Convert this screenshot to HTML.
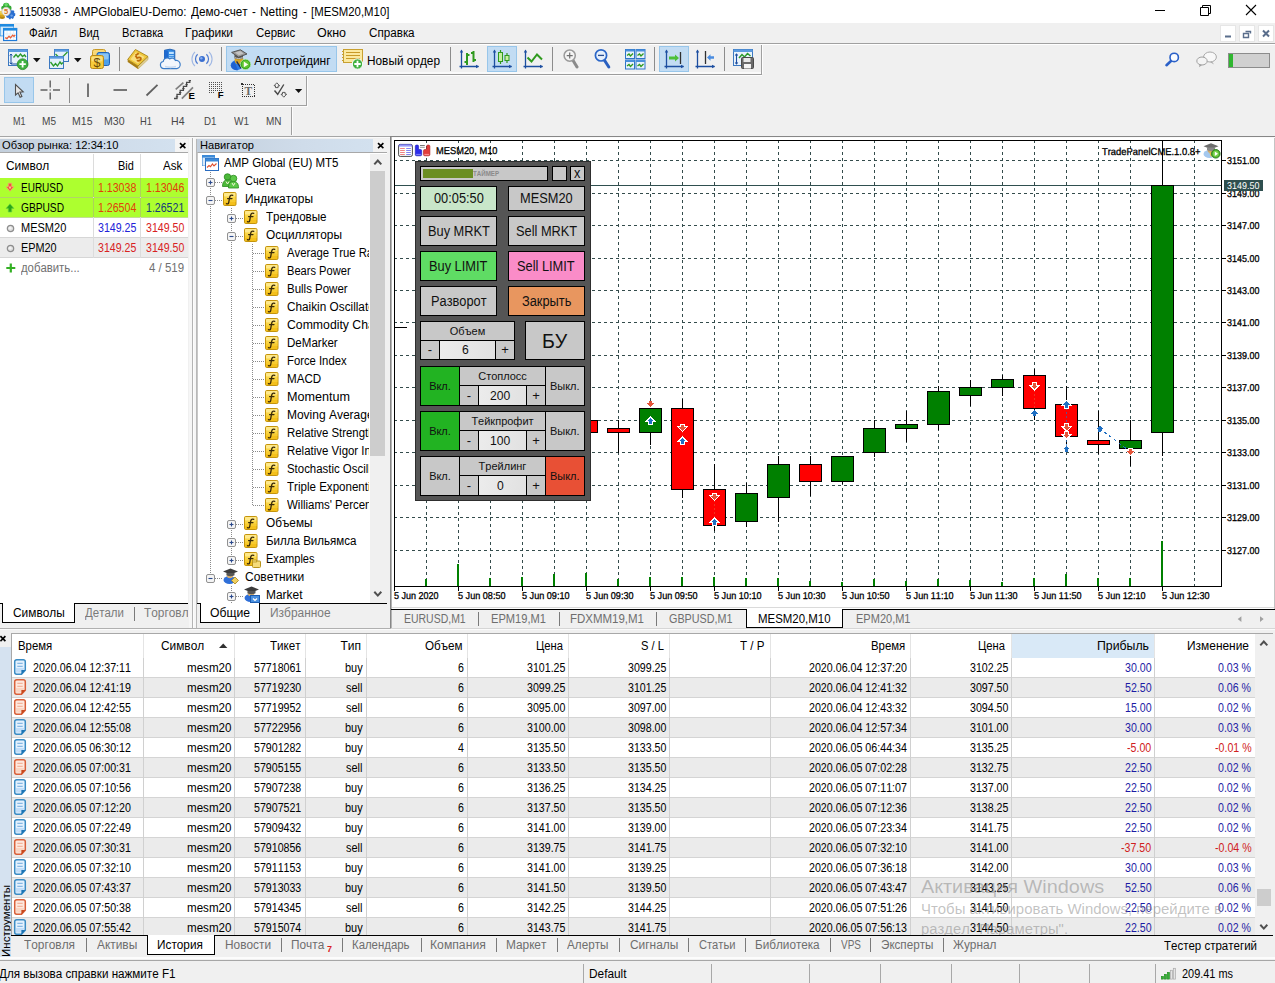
<!DOCTYPE html>
<html><head><meta charset="utf-8"><title>MT5</title>
<style>
html,body{margin:0;padding:0;}
body{font-kerning:none;width:1275px;height:983px;overflow:hidden;background:#f0f0f0;position:relative;font-family:"Liberation Sans",sans-serif;}
div,span.t,svg{position:absolute;}
span.t{white-space:pre;transform-origin:0 50%;}
svg{overflow:visible;}
.clip{overflow:hidden;}
</style></head><body>
<div style="left:0px;top:0px;width:1275px;height:23px;background:#ffffff;"></div>
<svg style="left:0px;top:2px;" width="18" height="19" viewBox="0 0 18 19">
<ellipse cx="2.2" cy="15.2" rx="2.8" ry="1.7" fill="#b8860b"/><ellipse cx="2.2" cy="13.4" rx="2.8" ry="1.7" fill="#d4a017"/><ellipse cx="2.2" cy="11.6" rx="2.8" ry="1.7" fill="#e8c030"/><ellipse cx="2.2" cy="10" rx="2.6" ry="1.5" fill="#f0d050"/>
<circle cx="10.4" cy="12.3" r="4.1" fill="#2a6fd0" stroke="#2a6fd0" stroke-width="1.6" stroke-dasharray="1.8 1.2"/><circle cx="11.6" cy="13.6" r="1.2" fill="#6aa0ea"/>
<circle cx="6.2" cy="3.9" r="3.2" fill="#3cb43c"/><circle cx="3.4" cy="6" r="2.2" fill="#34a834"/><circle cx="9.2" cy="6" r="2.4" fill="#34a834"/><circle cx="6.2" cy="2.6" r="1.6" fill="#6cd86c"/>
<circle cx="6.1" cy="9.5" r="4.2" fill="#f6f2ec" stroke="#cfc8bc" stroke-width="0.8"/>
<text x="6.1" y="12.2" font-size="7.6" font-weight="bold" text-anchor="middle" fill="#d87820" font-family="Liberation Sans">5</text></svg>
<span class="t" style="left:19.30px;top:4.25px;font-size:12px;line-height:16px;height:16px;color:#000;transform:scaleX(0.8904);">1150938</span>
<span class="t" style="left:64.40px;top:4.25px;font-size:12px;line-height:16px;height:16px;color:#000;transform:scaleX(0.9508);">-</span>
<span class="t" style="left:72.50px;top:4.25px;font-size:12px;line-height:16px;height:16px;color:#000;transform:scaleX(0.9734);">AMPGlobalEU-Demo:</span>
<span class="t" style="left:191.00px;top:4.25px;font-size:12px;line-height:16px;height:16px;color:#000;transform:scaleX(0.9752);">Демо-счет</span>
<span class="t" style="left:252.20px;top:4.25px;font-size:12px;line-height:16px;height:16px;color:#000;transform:scaleX(0.9508);">-</span>
<span class="t" style="left:260.20px;top:4.25px;font-size:12px;line-height:16px;height:16px;color:#000;transform:scaleX(0.9942);">Netting</span>
<span class="t" style="left:302.60px;top:4.25px;font-size:12px;line-height:16px;height:16px;color:#000;transform:scaleX(0.9258);">-</span>
<span class="t" style="left:311.30px;top:4.25px;font-size:12px;line-height:16px;height:16px;color:#000;transform:scaleX(0.9481);">[MESM20,M10]</span>
<svg style="left:1150px;top:0px;" width="125" height="23" viewBox="0 0 125 23">
<path d="M5 10.5H15" stroke="#000" stroke-width="1" fill="none"/>
<path d="M50.5 7.5H58.5V15.5H50.5Z M52.5 7.5V5.5H60.5V13.5H58.5" stroke="#000" stroke-width="1" fill="none"/>
<path d="M96 5L106 15M106 5L96 15" stroke="#000" stroke-width="1.1" fill="none"/></svg>
<div style="left:0px;top:23px;width:1275px;height:20px;background:#f0f0f0;"></div>
<svg style="left:0px;top:24px;" width="18" height="18" viewBox="0 0 18 18">
<rect x="0" y="0" width="14" height="12.3" fill="#1f8ae0"/><rect x="0.5" y="2.6" width="13" height="9" fill="#d6ecfc"/>
<rect x="3.6" y="4.5" width="13" height="12" fill="#ffffff" stroke="#1f7ad8" stroke-width="1.2"/><rect x="3" y="4" width="14.2" height="2.6" fill="#1f8ae0"/>
<path d="M7 7v9M10.3 7v9M13.6 7v9M4 10h12M4 13.5h12" stroke="#d8ecfa" stroke-width="0.8"/>
<path d="M5.2 13.6l1.8 1 2-2.4 1.6 1.6 2-2.6 1.4 1.2 1.2-1.6" stroke="#e8603a" stroke-width="1.3" fill="none"/></svg>
<span class="t" style="left:28.60px;top:25.25px;font-size:12px;line-height:16px;height:16px;color:#000;transform:scaleX(0.9525);">Файл</span>
<span class="t" style="left:79.30px;top:25.25px;font-size:12px;line-height:16px;height:16px;color:#000;transform:scaleX(0.9259);">Вид</span>
<span class="t" style="left:121.50px;top:25.25px;font-size:12px;line-height:16px;height:16px;color:#000;transform:scaleX(0.9264);">Вставка</span>
<span class="t" style="left:185.00px;top:25.25px;font-size:12px;line-height:16px;height:16px;color:#000;transform:scaleX(0.9922);">Графики</span>
<span class="t" style="left:255.50px;top:25.25px;font-size:12px;line-height:16px;height:16px;color:#000;transform:scaleX(0.9539);">Сервис</span>
<span class="t" style="left:317.00px;top:25.25px;font-size:12px;line-height:16px;height:16px;color:#000;transform:scaleX(1.0400);">Окно</span>
<span class="t" style="left:368.50px;top:25.25px;font-size:12px;line-height:16px;height:16px;color:#000;transform:scaleX(0.9720);">Справка</span>
<div style="left:1220px;top:25px;width:16px;height:17px;background:#ffffff;border:1px solid #e6e6e6;box-sizing:border-box;"></div>
<div style="left:1239px;top:25px;width:16px;height:17px;background:#ffffff;border:1px solid #e6e6e6;box-sizing:border-box;"></div>
<div style="left:1258px;top:25px;width:16px;height:17px;background:#ffffff;border:1px solid #e6e6e6;box-sizing:border-box;"></div>
<svg style="left:1220px;top:25px;" width="55" height="17" viewBox="0 0 55 17">
<rect x="5" y="10.5" width="6" height="2" fill="#5a6e8c"/>
<path d="M25.5 6.5H30.5V8.5M23.5 8.5H28.5V12.5H23.5Z" stroke="#5a6e8c" stroke-width="1.4" fill="none"/>
<path d="M43 5.5L49 11.5M49 5.5L43 11.5" stroke="#5a6e8c" stroke-width="2" fill="none"/></svg>
<div style="left:0px;top:43px;width:1275px;height:1px;background:#a0a0a0;"></div>
<div style="left:0px;top:44px;width:1275px;height:1px;background:#ffffff;"></div>
<div style="left:0px;top:72px;width:761px;height:2px;background:#fafafa;"></div>
<div style="left:0px;top:74px;width:762px;height:1px;background:#9c9c9c;"></div>
<div style="left:0px;top:75px;width:762px;height:1px;background:#fcfcfc;"></div>
<div style="left:761px;top:45px;width:1px;height:29px;background:#a0a0a0;"></div>
<div style="left:762px;top:45px;width:1px;height:29px;background:#fdfdfd;"></div>
<div style="left:119px;top:47px;width:1px;height:24px;background:#8c8c8c;"></div>
<div style="left:221px;top:47px;width:1px;height:24px;background:#8c8c8c;"></div>
<div style="left:450px;top:47px;width:1px;height:24px;background:#8c8c8c;"></div>
<div style="left:552px;top:47px;width:1px;height:24px;background:#8c8c8c;"></div>
<div style="left:654px;top:47px;width:1px;height:24px;background:#8c8c8c;"></div>
<div style="left:724px;top:47px;width:1px;height:24px;background:#8c8c8c;"></div>
<div style="left:226px;top:46px;width:111px;height:26px;background:#c2dcf3;border:1px solid #98c6ea;box-sizing:border-box;"></div>
<div style="left:487px;top:46px;width:30px;height:26px;background:#c2dcf3;border:1px solid #98c6ea;box-sizing:border-box;"></div>
<div style="left:659px;top:46px;width:30px;height:26px;background:#c2dcf3;border:1px solid #98c6ea;box-sizing:border-box;"></div>
<svg style="left:8px;top:49px;" width="21" height="21" viewBox="0 0 21 21">
<rect x="0.5" y="0.5" width="19" height="16" fill="#eaf3fc" stroke="#3c78c0"/><rect x="0.5" y="0.5" width="19" height="2.5" fill="#5b9be0"/>
<path d="M3 5v10M1.8 6.5L3 5l1.2 1.5M1.8 13.5L3 15l1.2-1.5M3 15h9" stroke="#1c4ea0" stroke-width="1" fill="none"/>
<path d="M5.5 8.5l2.5-3 2 2.5 2.5-3 2 2.5 2 -1.5 1.5 2" stroke="#2a9a2a" stroke-width="1.4" fill="none"/>
<circle cx="14.6" cy="15.2" r="5.4" fill="#3fb03f" stroke="#2a8a2a" stroke-width="0.8"/><path d="M14.6 12v6.4M11.4 15.2h6.4" stroke="#fff" stroke-width="1.8"/></svg>
<svg style="left:33px;top:58px;" width="8" height="5" viewBox="0 0 8 5"><path d="M0 0h7.5L3.75 4.2z" fill="#111"/></svg>
<svg style="left:49px;top:49px;" width="21" height="21" viewBox="0 0 21 21">
<rect x="5.5" y="0.5" width="14" height="12" fill="#e4f0fb" stroke="#3c78c0"/><rect x="5.5" y="0.5" width="14" height="2.2" fill="#5b9be0"/>
<path d="M6.5 5l4 4 4-2 4-4" stroke="#2a9a2a" stroke-width="1.3" fill="none"/>
<rect x="0.5" y="7.5" width="14" height="12" fill="#e4f0fb" stroke="#3c78c0"/><rect x="0.5" y="7.5" width="14" height="2.2" fill="#5b9be0"/>
<path d="M1.5 13l3 4 2-2.5 2 2.5 2.5-4 1.5 2 1.5-1.5" stroke="#2a9a2a" stroke-width="1.3" fill="none"/></svg>
<svg style="left:74px;top:58px;" width="8" height="5" viewBox="0 0 8 5"><path d="M0 0h7.5L3.75 4.2z" fill="#111"/></svg>
<svg style="left:90px;top:49px;" width="21" height="21" viewBox="0 0 21 21">
<rect x="2.5" y="0.5" width="13" height="13" rx="2" fill="#f8d878" stroke="#c89a28"/>
<rect x="7" y="3.5" width="12.5" height="13" rx="2" fill="#4fa0e8" stroke="#1f62b8"/><rect x="8" y="4.5" width="10.5" height="6" rx="1.5" fill="#8cc4f4"/>
<rect x="0.5" y="6.5" width="13" height="13" rx="2" fill="#f7cb3a" stroke="#b8881a"/><rect x="1.5" y="7.5" width="11" height="5" rx="1.5" fill="#fbe07a"/>
<text x="7" y="17.9" font-size="12.5" text-anchor="middle" fill="#6a4a08" font-family="Liberation Sans">$</text></svg>
<svg style="left:127px;top:49px;" width="22" height="21" viewBox="0 0 22 21">
<path d="M0.7 10.5l10.3 6.5v3L0.7 13z" fill="#a87c14"/>
<path d="M11 17L21 7.5v3L11 20z" fill="#efe6c0" stroke="#b89a3a" stroke-width="0.6"/><path d="M11 18l10-9.5M11 19l10-9.5" stroke="#c8b060" stroke-width="0.5"/>
<path d="M0.7 10.5L8.4 0.5 21 7.5 11 17z" fill="#f0c83c" stroke="#a88418" stroke-width="0.9"/>
<path d="M3.5 10.3L8.8 3.2 17.5 8 10.8 14.4z" fill="#f8e080"/>
<path d="M8.4 6.6l3.4-2.4M8.4 6.6l1.7 2.4c3-1.7 4.9.4 3.1 2.1-1.1 1-2.5.7-3.1 0" stroke="#c06c08" stroke-width="1.8" fill="none"/></svg>
<svg style="left:160px;top:49px;" width="21" height="21" viewBox="0 0 21 21">
<path d="M4.5 1.2l5.5-1 4.8 1.2v9.6H4.5z" fill="#2f86e0" stroke="#1c5cb0" stroke-width="0.9"/><path d="M4.5 1.2l3.5.6v9.2H4.5z" fill="#1f6ad0"/>
<rect x="9" y="2.8" width="4.8" height="2.2" fill="#bfe2ff"/><rect x="9" y="6" width="4.8" height="1.2" fill="#9fd0fb"/><rect x="9" y="8" width="4.8" height="1.2" fill="#9fd0fb"/>
<path d="M4 19.6a3.6 3.6 0 0 1-.8-7.1 4 4 0 0 1 6.6-2.6 3.6 3.6 0 0 1 5.6 1.6 4.1 4.1 0 0 1 1.4 8.1z" fill="#f2f6fc" stroke="#3a7cc8" stroke-width="1.2"/>
<path d="M5 17.6c3 .8 8 .8 11 0" stroke="#c8daf0" stroke-width="1.6" fill="none"/></svg>
<svg style="left:192px;top:49px;" width="21" height="21" viewBox="0 0 21 21">
<circle cx="10" cy="10" r="3" fill="#3a6fd0"/><circle cx="9.3" cy="9.2" r="1.2" fill="#86aef0"/>
<path d="M5.6 5.2a6.5 6.5 0 0 0 0 9.6M14.4 5.2a6.5 6.5 0 0 1 0 9.6" stroke="#4a78d0" stroke-width="1.2" fill="none"/>
<path d="M3 2.8a10 10 0 0 0 0 14.4M17 2.8a10 10 0 0 1 0 14.4" stroke="#a0b8e4" stroke-width="1.1" fill="none"/></svg>
<svg style="left:230px;top:49px;" width="22" height="22" viewBox="0 0 22 22">
<ellipse cx="6.6" cy="16.3" rx="5.9" ry="5" fill="#2a7ae8"/><path d="M1 17c1 3.4 4 4.4 7 4.2L4.4 12.6C2.4 13.4 1 15 1 17z" fill="#1f62d0"/>
<path d="M4.7 9.2h8.6v2.6c0 2.2-2 3.6-4.3 3.6s-4.3-1.4-4.3-3.6z" fill="#d8a424"/>
<path d="M6.6 12.4l4.6 7" stroke="#1c2c50" stroke-width="1.3"/>
<path d="M4.4 5.6v3.6c2.6 1.5 6 1.5 8.6 0V5.6z" fill="#5a5a5a"/><path d="M4.8 8.6c2.4 1.2 5.4 1.2 7.8 0" stroke="#c8c8c8" stroke-width="1" fill="none"/>
<path d="M1.6 3.4L10.4 0.8 17 5 8.6 8.2z" fill="#9a9a9a" stroke="#4a4a4a" stroke-width="0.9"/><path d="M5 3.6l5-1.5 3.6 2.3-4.8 1.8z" fill="#c4c4c4"/>
<circle cx="15.5" cy="15.4" r="5.2" fill="#3aa81c" stroke="#b8ecb0" stroke-width="0.7"/><circle cx="15.5" cy="15.2" r="3.8" fill="#62c634"/>
<path d="M13.8 12.6v5.6l4.4-2.8z" fill="#fbfff0"/></svg>
<span class="t" style="left:254.30px;top:53.25px;font-size:12px;line-height:16px;height:16px;color:#000;">Алготрейдинг</span>
<svg style="left:342px;top:48px;" width="22" height="22" viewBox="0 0 22 22">
<rect x="1.5" y="1.5" width="19" height="13" fill="#fbe9a0" stroke="#c8a030"/>
<path d="M4 4.5h14M4 7.5h14M4 10.5h14" stroke="#c89a28" stroke-width="1"/><path d="M1.5 3.5h-1.5M1.5 6.5h-1.5M1.5 9.5h-1.5M1.5 12.5h-1.5" stroke="#c8a030"/>
<circle cx="15.5" cy="16" r="5.2" fill="#3fb03f" stroke="#fff" stroke-width="1"/><path d="M15.5 12.8v6.4M12.3 16h6.4" stroke="#fff" stroke-width="1.8"/></svg>
<span class="t" style="left:366.50px;top:53.25px;font-size:12px;line-height:16px;height:16px;color:#000;transform:scaleX(0.9855);">Новый ордер</span>
<svg style="left:459px;top:49px;" width="21" height="21" viewBox="0 0 21 21"><path d="M2.5 1.5v18M0.5 17.5h19" stroke="#1c4ea0" stroke-width="1.3" fill="none"/><path d="M0.8 3.6L2.5 0.5l1.7 3.1z M17 15.8l3.1 1.7-3.1 1.7z" fill="#1c4ea0"/><path d="M8 4v12M5.5 13H8M8 6h2.5M14.5 2v11M12 4h2.5M14.5 11H17" stroke="#2f9a1e" stroke-width="2" fill="none"/></svg>
<svg style="left:492px;top:49px;" width="21" height="21" viewBox="0 0 21 21"><path d="M2.5 1.5v18M0.5 17.5h19" stroke="#1c4ea0" stroke-width="1.3" fill="none"/><path d="M0.8 3.6L2.5 0.5l1.7 3.1z M17 15.8l3.1 1.7-3.1 1.7z" fill="#1c4ea0"/><path d="M8.5 1v14M15 4v10" stroke="#2f9a1e" stroke-width="1.2"/><rect x="6.5" y="3.5" width="4" height="9" fill="#c8f0a0" stroke="#2f9a1e"/><rect x="13" y="6.5" width="4" height="5" fill="#c8f0a0" stroke="#2f9a1e"/></svg>
<svg style="left:523px;top:49px;" width="21" height="21" viewBox="0 0 21 21"><path d="M2.5 1.5v18M0.5 17.5h19" stroke="#1c4ea0" stroke-width="1.3" fill="none"/><path d="M0.8 3.6L2.5 0.5l1.7 3.1z M17 15.8l3.1 1.7-3.1 1.7z" fill="#1c4ea0"/><path d="M4.5 8.5l4 4 5.5-7 5 5" stroke="#2f9a1e" stroke-width="2" fill="none"/></svg>
<svg style="left:563px;top:49px;" width="16" height="21" viewBox="0 0 16 21"><path d="M9.5 10.5l4.5 7.5" stroke="#8a8a8a" stroke-width="3" stroke-linecap="round"/>
<circle cx="6.7" cy="6.6" r="5.6" fill="#f4f4f4" stroke="#9a9a9a" stroke-width="1.5"/><path d="M6.7 3.6v6M3.7 6.6h6" stroke="#707070" stroke-width="1.2"/></svg>
<svg style="left:594px;top:49px;" width="17" height="21" viewBox="0 0 17 21"><path d="M10 10.5l4.8 7.5" stroke="#2a60c0" stroke-width="3" stroke-linecap="round"/>
<circle cx="7" cy="6.4" r="5.6" fill="#e6f0fc" stroke="#2a66c8" stroke-width="1.7"/><path d="M4 6.4h6" stroke="#2a4e90" stroke-width="1.3"/></svg>
<svg style="left:625px;top:49px;" width="21" height="21" viewBox="0 0 21 21"><rect x="0.5" y="0.5" width="9" height="9" fill="#e8f2fc" stroke="#2f76c8"/><rect x="0.5" y="0.5" width="9" height="2" fill="#4a90dc"/><path d="M2 6.5l2-1.5 1.5 2 2.5-2.5" stroke="#2f9a1e" stroke-width="1.3" fill="none"/><rect x="11.0" y="0.5" width="9" height="9" fill="#e8f2fc" stroke="#2f76c8"/><rect x="11.0" y="0.5" width="9" height="2" fill="#4a90dc"/><path d="M12.5 6.5l2-1.5 1.5 2 2.5-2.5" stroke="#2f9a1e" stroke-width="1.3" fill="none"/><rect x="0.5" y="11.0" width="9" height="9" fill="#e8f2fc" stroke="#2f76c8"/><rect x="0.5" y="11.0" width="9" height="2" fill="#4a90dc"/><path d="M2 17.0l2-1.5 1.5 2 2.5-2.5" stroke="#2f9a1e" stroke-width="1.3" fill="none"/><rect x="11.0" y="11.0" width="9" height="9" fill="#e8f2fc" stroke="#2f76c8"/><rect x="11.0" y="11.0" width="9" height="2" fill="#4a90dc"/><path d="M12.5 17.0l2-1.5 1.5 2 2.5-2.5" stroke="#2f9a1e" stroke-width="1.3" fill="none"/></svg>
<svg style="left:664px;top:49px;" width="21" height="21" viewBox="0 0 21 21"><path d="M2.5 1.5v18M0.5 17.5h19" stroke="#1c4ea0" stroke-width="1.3" fill="none"/><path d="M0.8 3.6L2.5 0.5l1.7 3.1z M17 15.8l3.1 1.7-3.1 1.7z" fill="#1c4ea0"/><path d="M16.5 3v12" stroke="#303030" stroke-width="1.3"/><path d="M5 7.5h6v-2l4 3.5-4 3.5v-2H5z" fill="#4cc03a"/></svg>
<svg style="left:695px;top:49px;" width="21" height="21" viewBox="0 0 21 21"><path d="M2.5 1.5v18M0.5 17.5h19" stroke="#1c4ea0" stroke-width="1.3" fill="none"/><path d="M0.8 3.6L2.5 0.5l1.7 3.1z M17 15.8l3.1 1.7-3.1 1.7z" fill="#1c4ea0"/><path d="M10.5 2v13" stroke="#303030" stroke-width="1.3"/><path d="M19 7.2h-3.5v-2L12 8.5l3.5 3.3v-2H19z" fill="#4a8ce0"/></svg>
<svg style="left:733px;top:49px;" width="22" height="21" viewBox="0 0 22 21">
<rect x="0.5" y="0.5" width="19" height="16" fill="#eaf3fc" stroke="#3c78c0"/><rect x="0.5" y="0.5" width="19" height="2.5" fill="#5b9be0"/>
<path d="M3.5 5v10M2.2 6.5L3.5 5l1.3 1.5M2.2 13.5L3.5 15l1.3-1.5" stroke="#1c4ea0" stroke-width="1.1" fill="none"/>
<path d="M6 9l3-3.5 2.5 2.5 3-3.5 3 2.5" stroke="#2a9a2a" stroke-width="1.5" fill="none"/>
<rect x="8.5" y="8.5" width="12" height="11" rx="1" fill="#6a6a6a" stroke="#4a4a4a"/><rect x="10.5" y="9" width="7" height="4" fill="#e8e8e8"/><rect x="11" y="15" width="7" height="4.5" fill="#f4f4f4"/></svg>
<svg style="left:1165px;top:52px;" width="15" height="15" viewBox="0 0 15 15"><path d="M6.5 8.5L1.5 13.2" stroke="#2a60c8" stroke-width="2.6" stroke-linecap="round"/><circle cx="9.2" cy="5.4" r="4.2" fill="#fafcff" stroke="#2a60c8" stroke-width="1.6"/></svg>
<svg style="left:1196px;top:51px;" width="22" height="17" viewBox="0 0 22 17">
<ellipse cx="14" cy="6" rx="6.4" ry="5" fill="#f8f8f8" stroke="#a8a8a8"/><path d="M16 10.5l2 3-4-2.5z" fill="#a8a8a8"/>
<ellipse cx="6" cy="10" rx="5.2" ry="4" fill="#f4f4f4" stroke="#a0a0a0"/><path d="M3.5 13.5l-.5 2.8 3-2.3z" fill="#a0a0a0"/></svg>
<div style="left:1228px;top:53px;width:42px;height:15px;background:#d0d0d0;border:1px solid #8c8c8c;box-sizing:border-box;"></div>
<div style="left:1229px;top:54px;width:4px;height:13px;background:#2fb62f;"></div>
<div style="left:0px;top:105px;width:307px;height:1px;background:#a0a0a0;"></div>
<div style="left:0px;top:106px;width:308px;height:1px;background:#fcfcfc;"></div>
<div style="left:306px;top:76px;width:1px;height:30px;background:#a0a0a0;"></div>
<div style="left:307px;top:76px;width:1px;height:30px;background:#fcfcfc;"></div>
<div style="left:4px;top:77px;width:30px;height:26px;background:#c2dcf3;border:1px solid #98c6ea;box-sizing:border-box;"></div>
<div style="left:69px;top:78px;width:1px;height:25px;background:#8c8c8c;"></div>
<svg style="left:14px;top:83px;" width="10" height="16" viewBox="0 0 10 16"><path d="M1.5 1.5v10.5l2.6-2.2 2 4.4 1.8-.8-2-4.3 3.3-.2z" fill="#e8e8e8" stroke="#505050" stroke-width="1.1"/></svg>
<svg style="left:40px;top:80px;" width="21" height="21" viewBox="0 0 21 21"><path d="M10.2 0.5v7M10.2 12.5v7M0.5 10h7M13 10h7" stroke="#606060" stroke-width="1.4"/><rect x="9.6" y="9.4" width="1.2" height="1.2" fill="#606060"/></svg>
<svg style="left:80px;top:80px;" width="90" height="21" viewBox="0 0 90 21"><path d="M8 3.5v13.5" stroke="#606060" stroke-width="1.7"/><path d="M33.5 10h13.5" stroke="#606060" stroke-width="1.7"/><path d="M66.5 15.5L77.5 4.8" stroke="#606060" stroke-width="1.8"/></svg>
<svg style="left:173px;top:79px;" width="22" height="22" viewBox="0 0 22 22"><path d="M2.7 10.3L10.4 3.6M8.8 19.6L20 8.4" stroke="#808080" stroke-width="1.7"/>
<path d="M1 19.5h3v-4.2h3.2v-4h3.2v-4h3.2v-4h3.2v-2.3" stroke="#484848" stroke-width="1.3" fill="none"/><path d="M2.8 17.8h2.4M6 13.6h2.4M9.2 9.6h2.4M12.4 5.6h2.4M15.6 1.6h2.4" stroke="#484848" stroke-width="1"/>
<text x="15.6" y="19.9" font-size="9.6" font-weight="bold" fill="#000" font-family="Liberation Sans">E</text></svg>
<svg style="left:209px;top:81px;" width="16" height="19" viewBox="0 0 16 19"><path d="M0 1.5h13M0 3.5h13M0 5.5h13M0 7.5h13M0 9.5h13M0 11.5h5" stroke="#505050" stroke-width="1" stroke-dasharray="1 1" shape-rendering="crispEdges"/>
<text x="8.8" y="17.4" font-size="9.6" font-weight="bold" fill="#000" font-family="Liberation Sans">F</text></svg>
<svg style="left:241px;top:83px;" width="15" height="15" viewBox="0 0 15 15"><rect x="1.5" y="1.5" width="12" height="12" fill="none" stroke="#303030" stroke-width="1" stroke-dasharray="1 1" shape-rendering="crispEdges"/><rect x="0" y="0" width="2" height="2" fill="#303030"/>
<text x="7.4" y="11.6" font-size="11.5" font-weight="bold" text-anchor="middle" fill="#6a6a6a" font-family="Liberation Serif">T</text></svg>
<svg style="left:273px;top:82px;" width="15" height="16" viewBox="0 0 15 16"><path d="M1.5 8.5l3.2 3.8L10.8 2.5" stroke="#484848" stroke-width="1.4" fill="none"/>
<path d="M3.8 0.8l2.8 3H5.1v1.8H2.5V3.8H1z" fill="#f4f4f4" stroke="#484848" stroke-width="0.9"/>
<path d="M10.8 15.2l2.8-3h-1.5v-1.8H9.5v1.8H8z" fill="#f4f4f4" stroke="#484848" stroke-width="0.9"/></svg>
<svg style="left:295px;top:89px;" width="8" height="5" viewBox="0 0 8 5"><path d="M0 0h7.2L3.6 4z" fill="#111"/></svg>
<div style="left:291px;top:107px;width:1px;height:28px;background:#a0a0a0;"></div>
<div style="left:292px;top:107px;width:1px;height:28px;background:#fcfcfc;"></div>
<span class="t" style="left:12.50px;top:114.25px;font-size:11px;line-height:14px;height:14px;color:#484848;transform:scaleX(0.8180);">M1</span>
<span class="t" style="left:42.00px;top:114.25px;font-size:11px;line-height:14px;height:14px;color:#484848;transform:scaleX(0.9161);">M5</span>
<span class="t" style="left:72.00px;top:114.25px;font-size:11px;line-height:14px;height:14px;color:#484848;transform:scaleX(0.9580);">M15</span>
<span class="t" style="left:104.00px;top:114.25px;font-size:11px;line-height:14px;height:14px;color:#484848;transform:scaleX(0.9580);">M30</span>
<span class="t" style="left:140.00px;top:114.25px;font-size:11px;line-height:14px;height:14px;color:#484848;transform:scaleX(0.8534);">H1</span>
<span class="t" style="left:171.00px;top:114.25px;font-size:11px;line-height:14px;height:14px;color:#484848;transform:scaleX(0.9600);">H4</span>
<span class="t" style="left:204.00px;top:114.25px;font-size:11px;line-height:14px;height:14px;color:#484848;transform:scaleX(0.8889);">D1</span>
<span class="t" style="left:234.00px;top:114.25px;font-size:11px;line-height:14px;height:14px;color:#484848;transform:scaleX(0.9091);">W1</span>
<span class="t" style="left:266.00px;top:114.25px;font-size:11px;line-height:14px;height:14px;color:#484848;transform:scaleX(0.9060);">MN</span>
<div style="left:0px;top:136px;width:390px;height:1px;background:#a6a6a6;"></div>
<div style="left:390px;top:136px;width:885px;height:1px;background:#868686;"></div>
<div style="left:0px;top:137px;width:1275px;height:1px;background:#fafafa;"></div>
<div style="left:0px;top:138px;width:189px;height:490px;background:#f0f0f0;"></div>
<div style="left:0px;top:139px;width:175px;height:13px;background:linear-gradient(90deg,#c3cfdc 0%,#cfdcea 60%,#d3e1ef 100%);"></div>
<div style="left:175px;top:139px;width:13px;height:13px;background:#f4f4f4;"></div>
<span class="t" style="left:1.60px;top:138.25px;font-size:11px;line-height:14px;height:14px;color:#000;transform:scaleX(1.0117);">Обзор рынка: 12:34:10</span>
<svg style="left:179px;top:142px;" width="8" height="8" viewBox="0 0 8 8"><path d="M1 1.2L6.4 6.2M6.4 1.2L1 6.2" stroke="#000" stroke-width="1.6"/></svg>
<div style="left:0px;top:153px;width:188px;height:450px;background:#ffffff;"></div>
<div style="left:0px;top:152px;width:188px;height:1px;background:#a8a8a8;"></div>
<span class="t" style="left:6.40px;top:158.25px;font-size:12px;line-height:16px;height:16px;color:#000;transform:scaleX(0.9915);">Символ</span>
<span class="t" style="left:118.40px;top:158.25px;font-size:12px;line-height:16px;height:16px;color:#000;transform:scaleX(0.9109);">Bid</span>
<span class="t" style="left:163.30px;top:158.25px;font-size:12px;line-height:16px;height:16px;color:#000;transform:scaleX(0.9648);">Ask</span>
<div style="left:0px;top:178px;width:188px;height:20px;background:#adff2f;"></div>
<div style="left:0px;top:197px;width:188px;height:1px;background:#b2d468;"></div>
<svg style="left:5px;top:182px;" width="10" height="11" viewBox="0 0 10 11"><path d="M3.3 1.2h3.4v3.5h2.2L5 9.3 1.1 4.7h2.2z" fill="#f0583a" stroke="#f6a878" stroke-width="0.7"/><path d="M4.2 4.6h1.6v1.2l-0.8 1.4-0.8-1.4z" fill="#ffc8b0"/></svg>
<span class="t" style="left:21.40px;top:180.25px;font-size:12px;line-height:16px;height:16px;color:#000;transform:scaleX(0.8328);">EURUSD</span>
<span class="t" style="left:98.40px;top:180.25px;font-size:12px;line-height:16px;height:16px;color:#e0400a;transform:scaleX(0.8829);">1.13038</span>
<span class="t" style="left:145.50px;top:180.25px;font-size:12px;line-height:16px;height:16px;color:#e0400a;transform:scaleX(0.8829);">1.13046</span>
<div style="left:0px;top:198px;width:188px;height:20px;background:#adff2f;"></div>
<div style="left:0px;top:217px;width:188px;height:1px;background:#c4dc98;"></div>
<svg style="left:5px;top:202px;" width="10" height="11" viewBox="0 0 10 11"><path d="M3.3 10h3.4V6.4h2.2L5 1.8 1.1 6.4h2.2z" fill="#28a818" stroke="#6ad040" stroke-width="0.7"/></svg>
<span class="t" style="left:21.40px;top:200.25px;font-size:12px;line-height:16px;height:16px;color:#000;transform:scaleX(0.8485);">GBPUSD</span>
<span class="t" style="left:98.40px;top:200.25px;font-size:12px;line-height:16px;height:16px;color:#e0400a;transform:scaleX(0.8829);">1.26504</span>
<span class="t" style="left:145.50px;top:200.25px;font-size:12px;line-height:16px;height:16px;color:#14387a;transform:scaleX(0.8829);">1.26521</span>
<div style="left:0px;top:218px;width:188px;height:20px;background:#ffffff;"></div>
<div style="left:0px;top:237px;width:188px;height:1px;background:#d6d6d6;"></div>
<svg style="left:6px;top:224px;" width="9" height="9" viewBox="0 0 9 9"><circle cx="4.5" cy="4.5" r="3.2" fill="#dcdcdc" stroke="#8e8e8e" stroke-width="1.2"/><circle cx="4.2" cy="4.2" r="1.4" fill="#f2f2f2"/></svg>
<span class="t" style="left:21.40px;top:220.25px;font-size:12px;line-height:16px;height:16px;color:#000;transform:scaleX(0.9179);">MESM20</span>
<span class="t" style="left:98.40px;top:220.25px;font-size:12px;line-height:16px;height:16px;color:#2222d8;transform:scaleX(0.8829);">3149.25</span>
<span class="t" style="left:145.50px;top:220.25px;font-size:12px;line-height:16px;height:16px;color:#d82222;transform:scaleX(0.8829);">3149.50</span>
<div style="left:0px;top:238px;width:188px;height:20px;background:#ececec;"></div>
<div style="left:0px;top:257px;width:188px;height:1px;background:#d6d6d6;"></div>
<svg style="left:6px;top:244px;" width="9" height="9" viewBox="0 0 9 9"><circle cx="4.5" cy="4.5" r="3.2" fill="#dcdcdc" stroke="#8e8e8e" stroke-width="1.2"/><circle cx="4.2" cy="4.2" r="1.4" fill="#f2f2f2"/></svg>
<span class="t" style="left:21.40px;top:240.25px;font-size:12px;line-height:16px;height:16px;color:#000;transform:scaleX(0.9046);">EPM20</span>
<span class="t" style="left:98.40px;top:240.25px;font-size:12px;line-height:16px;height:16px;color:#d82222;transform:scaleX(0.8829);">3149.25</span>
<span class="t" style="left:145.50px;top:240.25px;font-size:12px;line-height:16px;height:16px;color:#d82222;transform:scaleX(0.8829);">3149.50</span>
<div style="left:93px;top:154px;width:1px;height:104px;background:#dcdcdc;"></div>
<div style="left:140px;top:154px;width:1px;height:104px;background:#dcdcdc;"></div>
<div style="left:93px;top:178px;width:1px;height:19px;background:#acd25a;"></div>
<div style="left:140px;top:178px;width:1px;height:19px;background:#acd25a;"></div>
<div style="left:93px;top:198px;width:1px;height:19px;background:#acd25a;"></div>
<div style="left:140px;top:198px;width:1px;height:19px;background:#acd25a;"></div>
<svg style="left:6px;top:263px;" width="10" height="10" viewBox="0 0 10 10"><path d="M4.8 0.5v9M0.3 5h9" stroke="#34b024" stroke-width="2.2"/></svg>
<span class="t" style="left:20.90px;top:260.25px;font-size:12px;line-height:16px;height:16px;color:#707070;transform:scaleX(0.9460);">добавить...</span>
<span class="t" style="left:148.70px;top:260.25px;font-size:12px;line-height:16px;height:16px;color:#707070;transform:scaleX(0.9565);">4 / 519</span>
<div style="left:0px;top:603px;width:188px;height:1px;background:#000;"></div>
<div style="left:2px;top:603px;width:73px;height:20px;background:#ffffff;border:1px solid #000;border-top:none;box-sizing:border-box;"></div>
<span class="t" style="left:12.50px;top:605.25px;font-size:12px;line-height:16px;height:16px;color:#000;transform:scaleX(0.9905);">Символы</span>
<span class="t" style="left:84.70px;top:605.25px;font-size:12px;line-height:16px;height:16px;color:#7a7a7a;transform:scaleX(0.9563);">Детали</span>
<div style="left:134px;top:607px;width:1px;height:14px;background:#7a7a7a;"></div>
<div class="clip" style="left:140px;top:603px;width:48px;height:24px;">
<span class="t" style="left:4.30px;top:2.25px;font-size:12px;line-height:16px;height:16px;color:#7a7a7a;transform:scaleX(0.9883);">Торговля</span>
</div>
<div style="left:189px;top:138px;width:7px;height:490px;background:#f6f6f6;"></div>
<div style="left:192px;top:138px;width:1px;height:490px;background:#b4b4b4;"></div>
<div style="left:193px;top:138px;width:1px;height:490px;background:#fcfcfc;"></div>
<div style="left:196px;top:138px;width:195px;height:490px;background:#f0f0f0;"></div>
<div style="left:196px;top:139px;width:1px;height:489px;background:#b8b8b8;"></div>
<div style="left:197px;top:139px;width:176px;height:13px;background:linear-gradient(90deg,#c3cfdc 0%,#cfdcea 60%,#d3e1ef 100%);"></div>
<div style="left:373px;top:139px;width:17px;height:13px;background:#f2f2f2;"></div>
<span class="t" style="left:199.50px;top:138.25px;font-size:11px;line-height:14px;height:14px;color:#000;transform:scaleX(1.0102);">Навигатор</span>
<svg style="left:377px;top:142px;" width="8" height="8" viewBox="0 0 8 8"><path d="M1 1.2L6.4 6.2M6.4 1.2L1 6.2" stroke="#000" stroke-width="1.6"/></svg>
<div style="left:197px;top:152px;width:190px;height:451px;background:#ffffff;border-top:1px solid #a8a8a8;border-left:1px solid #c8c8c8;box-sizing:border-box;"></div>
<div style="left:390px;top:137px;width:1px;height:491px;background:#868686;"></div>
<div style="left:391px;top:137px;width:1px;height:491px;background:#b4b4b4;"></div>
<div class="clip" style="left:198px;top:154px;width:171px;height:449px;">
<svg style="left:-198px;top:-154px" width="400" height="640" viewBox="0 0 400 640"><path d="M210.5 172v405" stroke="#8a8a8a" stroke-width="1" stroke-dasharray="1 1" fill="none"/><path d="M231.5 208v351" stroke="#8a8a8a" stroke-width="1" stroke-dasharray="1 1" fill="none"/><path d="M252.5 244v261.5" stroke="#8a8a8a" stroke-width="1" stroke-dasharray="1 1" fill="none"/><path d="M231.5 586v17" stroke="#8a8a8a" stroke-width="1" stroke-dasharray="1 1" fill="none"/><path d="M215 182.5h7" stroke="#8a8a8a" stroke-width="1" stroke-dasharray="1 1" fill="none"/><path d="M215 200.5h7" stroke="#8a8a8a" stroke-width="1" stroke-dasharray="1 1" fill="none"/><path d="M215 578.5h7" stroke="#8a8a8a" stroke-width="1" stroke-dasharray="1 1" fill="none"/><path d="M236 218.5h7" stroke="#8a8a8a" stroke-width="1" stroke-dasharray="1 1" fill="none"/><path d="M236 236.5h7" stroke="#8a8a8a" stroke-width="1" stroke-dasharray="1 1" fill="none"/><path d="M236 524.5h7" stroke="#8a8a8a" stroke-width="1" stroke-dasharray="1 1" fill="none"/><path d="M236 542.5h7" stroke="#8a8a8a" stroke-width="1" stroke-dasharray="1 1" fill="none"/><path d="M236 560.5h7" stroke="#8a8a8a" stroke-width="1" stroke-dasharray="1 1" fill="none"/><path d="M236 596.5h7" stroke="#8a8a8a" stroke-width="1" stroke-dasharray="1 1" fill="none"/><path d="M253 253.5h11" stroke="#8a8a8a" stroke-width="1" stroke-dasharray="1 1" fill="none"/><path d="M253 271.5h11" stroke="#8a8a8a" stroke-width="1" stroke-dasharray="1 1" fill="none"/><path d="M253 289.5h11" stroke="#8a8a8a" stroke-width="1" stroke-dasharray="1 1" fill="none"/><path d="M253 307.5h11" stroke="#8a8a8a" stroke-width="1" stroke-dasharray="1 1" fill="none"/><path d="M253 325.5h11" stroke="#8a8a8a" stroke-width="1" stroke-dasharray="1 1" fill="none"/><path d="M253 343.5h11" stroke="#8a8a8a" stroke-width="1" stroke-dasharray="1 1" fill="none"/><path d="M253 361.5h11" stroke="#8a8a8a" stroke-width="1" stroke-dasharray="1 1" fill="none"/><path d="M253 379.5h11" stroke="#8a8a8a" stroke-width="1" stroke-dasharray="1 1" fill="none"/><path d="M253 397.5h11" stroke="#8a8a8a" stroke-width="1" stroke-dasharray="1 1" fill="none"/><path d="M253 415.5h11" stroke="#8a8a8a" stroke-width="1" stroke-dasharray="1 1" fill="none"/><path d="M253 433.5h11" stroke="#8a8a8a" stroke-width="1" stroke-dasharray="1 1" fill="none"/><path d="M253 451.5h11" stroke="#8a8a8a" stroke-width="1" stroke-dasharray="1 1" fill="none"/><path d="M253 469.5h11" stroke="#8a8a8a" stroke-width="1" stroke-dasharray="1 1" fill="none"/><path d="M253 487.5h11" stroke="#8a8a8a" stroke-width="1" stroke-dasharray="1 1" fill="none"/><path d="M253 505.5h11" stroke="#8a8a8a" stroke-width="1" stroke-dasharray="1 1" fill="none"/></svg>
<svg style="left:4px;top:1px" width="17" height="17" viewBox="0 0 17 17">
<rect x="0" y="0" width="13" height="11" fill="#3c8ad8"/><rect x="0.6" y="2.6" width="11.8" height="8" fill="#dcebf9"/>
<rect x="3.5" y="3.5" width="13" height="12" fill="#ffffff" stroke="#2a6cc0"/><rect x="3.5" y="3.5" width="13" height="3" fill="#3c8ad8"/>
<path d="M5 12.5l2-2 1.5 1.2 2-2.7 1.5 2 2.5-2.5" stroke="#e05030" stroke-width="1.1" fill="none"/></svg>
<span class="t" style="left:25.70px;top:1.25px;font-size:12px;line-height:16px;height:16px;color:#000;transform:scaleX(0.9593);">AMP Global (EU) MT5</span>
<svg style="left:8px;top:24px" width="9" height="9" viewBox="0 0 9 9"><rect x="0.5" y="0.5" width="8" height="8" rx="1.5" fill="#f4f4f4" stroke="#919191"/><path d="M2.5 4.5h4" stroke="#2b4a8c" stroke-width="1.1"/><path d="M4.5 2.5v4" stroke="#2b4a8c" stroke-width="1.1"/></svg>
<svg style="left:24px;top:18px" width="18" height="17" viewBox="0 0 18 17">
<circle cx="5.5" cy="5" r="3.3" fill="#4cb83a" stroke="#2a8a1e" stroke-width="0.8"/><path d="M0.5 14.5c0-5 2-6.5 5-6.5s5 1.5 5 6.5z" fill="#4cb83a" stroke="#2a8a1e" stroke-width="0.8"/>
<circle cx="11.5" cy="6.5" r="3.3" fill="#5cc848" stroke="#2a8a1e" stroke-width="0.8"/><path d="M6.5 16c0-5 2-6.5 5-6.5s5 1.5 5 6.5z" fill="#5cc848" stroke="#2a8a1e" stroke-width="0.8"/>
<path d="M4 9.5l1.5 2.5L7 9.5M10 11l1.5 2.5L13 11" stroke="#f4f4d8" stroke-width="1" fill="none"/></svg>
<span class="t" style="left:47.00px;top:19.25px;font-size:12px;line-height:16px;height:16px;color:#000;transform:scaleX(0.9182);">Счета</span>
<svg style="left:8px;top:42px" width="9" height="9" viewBox="0 0 9 9"><rect x="0.5" y="0.5" width="8" height="8" rx="1.5" fill="#f4f4f4" stroke="#919191"/><path d="M2.5 4.5h4" stroke="#2b4a8c" stroke-width="1.1"/></svg>
<svg style="left:25px;top:38px" width="17" height="16" viewBox="0 0 17 16"><rect x="0.5" y="0.5" width="12.5" height="13" rx="1.2" fill="#f4c01c" stroke="#c4940c"/><rect x="1" y="1" width="11.5" height="4" rx="0.8" fill="#ffe98a"/><rect x="1" y="4.5" width="11.5" height="3.5" fill="#fad648"/><rect x="1" y="7.5" width="11.5" height="2.5" fill="#f7cb30"/><path d="M9.8 3.3c-2.2-.9-2.9.6-3.2 2.4L5.7 10.6c-.3 1.5-1.3 1.6-2.3 1.1M4.6 6.6h4.4" stroke="#3a2a08" stroke-width="1.3" fill="none" stroke-linecap="round"/></svg>
<span class="t" style="left:47.00px;top:37.25px;font-size:12px;line-height:16px;height:16px;color:#000;transform:scaleX(0.9949);">Индикаторы</span>
<svg style="left:29px;top:60px" width="9" height="9" viewBox="0 0 9 9"><rect x="0.5" y="0.5" width="8" height="8" rx="1.5" fill="#f4f4f4" stroke="#919191"/><path d="M2.5 4.5h4" stroke="#2b4a8c" stroke-width="1.1"/><path d="M4.5 2.5v4" stroke="#2b4a8c" stroke-width="1.1"/></svg>
<svg style="left:46px;top:56px" width="17" height="16" viewBox="0 0 17 16"><rect x="0.5" y="0.5" width="12.5" height="13" rx="1.2" fill="#f4c01c" stroke="#c4940c"/><rect x="1" y="1" width="11.5" height="4" rx="0.8" fill="#ffe98a"/><rect x="1" y="4.5" width="11.5" height="3.5" fill="#fad648"/><rect x="1" y="7.5" width="11.5" height="2.5" fill="#f7cb30"/><path d="M9.8 3.3c-2.2-.9-2.9.6-3.2 2.4L5.7 10.6c-.3 1.5-1.3 1.6-2.3 1.1M4.6 6.6h4.4" stroke="#3a2a08" stroke-width="1.3" fill="none" stroke-linecap="round"/></svg>
<span class="t" style="left:67.90px;top:55.25px;font-size:12px;line-height:16px;height:16px;color:#000;transform:scaleX(0.9656);">Трендовые</span>
<svg style="left:29px;top:78px" width="9" height="9" viewBox="0 0 9 9"><rect x="0.5" y="0.5" width="8" height="8" rx="1.5" fill="#f4f4f4" stroke="#919191"/><path d="M2.5 4.5h4" stroke="#2b4a8c" stroke-width="1.1"/></svg>
<svg style="left:46px;top:74px" width="17" height="16" viewBox="0 0 17 16"><rect x="0.5" y="0.5" width="12.5" height="13" rx="1.2" fill="#f4c01c" stroke="#c4940c"/><rect x="1" y="1" width="11.5" height="4" rx="0.8" fill="#ffe98a"/><rect x="1" y="4.5" width="11.5" height="3.5" fill="#fad648"/><rect x="1" y="7.5" width="11.5" height="2.5" fill="#f7cb30"/><path d="M9.8 3.3c-2.2-.9-2.9.6-3.2 2.4L5.7 10.6c-.3 1.5-1.3 1.6-2.3 1.1M4.6 6.6h4.4" stroke="#3a2a08" stroke-width="1.3" fill="none" stroke-linecap="round"/></svg>
<span class="t" style="left:67.90px;top:73.25px;font-size:12px;line-height:16px;height:16px;color:#000;transform:scaleX(0.9885);">Осцилляторы</span>
<svg style="left:67px;top:92px" width="17" height="16" viewBox="0 0 17 16"><rect x="0.5" y="0.5" width="12.5" height="13" rx="1.2" fill="#f4c01c" stroke="#c4940c"/><rect x="1" y="1" width="11.5" height="4" rx="0.8" fill="#ffe98a"/><rect x="1" y="4.5" width="11.5" height="3.5" fill="#fad648"/><rect x="1" y="7.5" width="11.5" height="2.5" fill="#f7cb30"/><path d="M9.8 3.3c-2.2-.9-2.9.6-3.2 2.4L5.7 10.6c-.3 1.5-1.3 1.6-2.3 1.1M4.6 6.6h4.4" stroke="#3a2a08" stroke-width="1.3" fill="none" stroke-linecap="round"/></svg>
<span class="t" style="left:88.90px;top:91.25px;font-size:12px;line-height:16px;height:16px;color:#000;transform:scaleX(0.9421);">Average True Range</span>
<svg style="left:67px;top:110px" width="17" height="16" viewBox="0 0 17 16"><rect x="0.5" y="0.5" width="12.5" height="13" rx="1.2" fill="#f4c01c" stroke="#c4940c"/><rect x="1" y="1" width="11.5" height="4" rx="0.8" fill="#ffe98a"/><rect x="1" y="4.5" width="11.5" height="3.5" fill="#fad648"/><rect x="1" y="7.5" width="11.5" height="2.5" fill="#f7cb30"/><path d="M9.8 3.3c-2.2-.9-2.9.6-3.2 2.4L5.7 10.6c-.3 1.5-1.3 1.6-2.3 1.1M4.6 6.6h4.4" stroke="#3a2a08" stroke-width="1.3" fill="none" stroke-linecap="round"/></svg>
<span class="t" style="left:88.90px;top:109.25px;font-size:12px;line-height:16px;height:16px;color:#000;transform:scaleX(0.9258);">Bears Power</span>
<svg style="left:67px;top:128px" width="17" height="16" viewBox="0 0 17 16"><rect x="0.5" y="0.5" width="12.5" height="13" rx="1.2" fill="#f4c01c" stroke="#c4940c"/><rect x="1" y="1" width="11.5" height="4" rx="0.8" fill="#ffe98a"/><rect x="1" y="4.5" width="11.5" height="3.5" fill="#fad648"/><rect x="1" y="7.5" width="11.5" height="2.5" fill="#f7cb30"/><path d="M9.8 3.3c-2.2-.9-2.9.6-3.2 2.4L5.7 10.6c-.3 1.5-1.3 1.6-2.3 1.1M4.6 6.6h4.4" stroke="#3a2a08" stroke-width="1.3" fill="none" stroke-linecap="round"/></svg>
<span class="t" style="left:88.90px;top:127.25px;font-size:12px;line-height:16px;height:16px;color:#000;transform:scaleX(0.9564);">Bulls Power</span>
<svg style="left:67px;top:146px" width="17" height="16" viewBox="0 0 17 16"><rect x="0.5" y="0.5" width="12.5" height="13" rx="1.2" fill="#f4c01c" stroke="#c4940c"/><rect x="1" y="1" width="11.5" height="4" rx="0.8" fill="#ffe98a"/><rect x="1" y="4.5" width="11.5" height="3.5" fill="#fad648"/><rect x="1" y="7.5" width="11.5" height="2.5" fill="#f7cb30"/><path d="M9.8 3.3c-2.2-.9-2.9.6-3.2 2.4L5.7 10.6c-.3 1.5-1.3 1.6-2.3 1.1M4.6 6.6h4.4" stroke="#3a2a08" stroke-width="1.3" fill="none" stroke-linecap="round"/></svg>
<span class="t" style="left:88.90px;top:145.25px;font-size:12px;line-height:16px;height:16px;color:#000;transform:scaleX(0.9819);">Chaikin Oscillator</span>
<svg style="left:67px;top:164px" width="17" height="16" viewBox="0 0 17 16"><rect x="0.5" y="0.5" width="12.5" height="13" rx="1.2" fill="#f4c01c" stroke="#c4940c"/><rect x="1" y="1" width="11.5" height="4" rx="0.8" fill="#ffe98a"/><rect x="1" y="4.5" width="11.5" height="3.5" fill="#fad648"/><rect x="1" y="7.5" width="11.5" height="2.5" fill="#f7cb30"/><path d="M9.8 3.3c-2.2-.9-2.9.6-3.2 2.4L5.7 10.6c-.3 1.5-1.3 1.6-2.3 1.1M4.6 6.6h4.4" stroke="#3a2a08" stroke-width="1.3" fill="none" stroke-linecap="round"/></svg>
<span class="t" style="left:88.90px;top:163.25px;font-size:12px;line-height:16px;height:16px;color:#000;transform:scaleX(1.0207);">Commodity Channel Index</span>
<svg style="left:67px;top:182px" width="17" height="16" viewBox="0 0 17 16"><rect x="0.5" y="0.5" width="12.5" height="13" rx="1.2" fill="#f4c01c" stroke="#c4940c"/><rect x="1" y="1" width="11.5" height="4" rx="0.8" fill="#ffe98a"/><rect x="1" y="4.5" width="11.5" height="3.5" fill="#fad648"/><rect x="1" y="7.5" width="11.5" height="2.5" fill="#f7cb30"/><path d="M9.8 3.3c-2.2-.9-2.9.6-3.2 2.4L5.7 10.6c-.3 1.5-1.3 1.6-2.3 1.1M4.6 6.6h4.4" stroke="#3a2a08" stroke-width="1.3" fill="none" stroke-linecap="round"/></svg>
<span class="t" style="left:88.90px;top:181.25px;font-size:12px;line-height:16px;height:16px;color:#000;transform:scaleX(0.9624);">DeMarker</span>
<svg style="left:67px;top:200px" width="17" height="16" viewBox="0 0 17 16"><rect x="0.5" y="0.5" width="12.5" height="13" rx="1.2" fill="#f4c01c" stroke="#c4940c"/><rect x="1" y="1" width="11.5" height="4" rx="0.8" fill="#ffe98a"/><rect x="1" y="4.5" width="11.5" height="3.5" fill="#fad648"/><rect x="1" y="7.5" width="11.5" height="2.5" fill="#f7cb30"/><path d="M9.8 3.3c-2.2-.9-2.9.6-3.2 2.4L5.7 10.6c-.3 1.5-1.3 1.6-2.3 1.1M4.6 6.6h4.4" stroke="#3a2a08" stroke-width="1.3" fill="none" stroke-linecap="round"/></svg>
<span class="t" style="left:88.90px;top:199.25px;font-size:12px;line-height:16px;height:16px;color:#000;transform:scaleX(0.9406);">Force Index</span>
<svg style="left:67px;top:218px" width="17" height="16" viewBox="0 0 17 16"><rect x="0.5" y="0.5" width="12.5" height="13" rx="1.2" fill="#f4c01c" stroke="#c4940c"/><rect x="1" y="1" width="11.5" height="4" rx="0.8" fill="#ffe98a"/><rect x="1" y="4.5" width="11.5" height="3.5" fill="#fad648"/><rect x="1" y="7.5" width="11.5" height="2.5" fill="#f7cb30"/><path d="M9.8 3.3c-2.2-.9-2.9.6-3.2 2.4L5.7 10.6c-.3 1.5-1.3 1.6-2.3 1.1M4.6 6.6h4.4" stroke="#3a2a08" stroke-width="1.3" fill="none" stroke-linecap="round"/></svg>
<span class="t" style="left:88.90px;top:217.25px;font-size:12px;line-height:16px;height:16px;color:#000;transform:scaleX(0.9679);">MACD</span>
<svg style="left:67px;top:236px" width="17" height="16" viewBox="0 0 17 16"><rect x="0.5" y="0.5" width="12.5" height="13" rx="1.2" fill="#f4c01c" stroke="#c4940c"/><rect x="1" y="1" width="11.5" height="4" rx="0.8" fill="#ffe98a"/><rect x="1" y="4.5" width="11.5" height="3.5" fill="#fad648"/><rect x="1" y="7.5" width="11.5" height="2.5" fill="#f7cb30"/><path d="M9.8 3.3c-2.2-.9-2.9.6-3.2 2.4L5.7 10.6c-.3 1.5-1.3 1.6-2.3 1.1M4.6 6.6h4.4" stroke="#3a2a08" stroke-width="1.3" fill="none" stroke-linecap="round"/></svg>
<span class="t" style="left:88.90px;top:235.25px;font-size:12px;line-height:16px;height:16px;color:#000;transform:scaleX(1.0513);">Momentum</span>
<svg style="left:67px;top:254px" width="17" height="16" viewBox="0 0 17 16"><rect x="0.5" y="0.5" width="12.5" height="13" rx="1.2" fill="#f4c01c" stroke="#c4940c"/><rect x="1" y="1" width="11.5" height="4" rx="0.8" fill="#ffe98a"/><rect x="1" y="4.5" width="11.5" height="3.5" fill="#fad648"/><rect x="1" y="7.5" width="11.5" height="2.5" fill="#f7cb30"/><path d="M9.8 3.3c-2.2-.9-2.9.6-3.2 2.4L5.7 10.6c-.3 1.5-1.3 1.6-2.3 1.1M4.6 6.6h4.4" stroke="#3a2a08" stroke-width="1.3" fill="none" stroke-linecap="round"/></svg>
<span class="t" style="left:88.90px;top:253.25px;font-size:12px;line-height:16px;height:16px;color:#000;">Moving Average of Oscillator</span>
<svg style="left:67px;top:272px" width="17" height="16" viewBox="0 0 17 16"><rect x="0.5" y="0.5" width="12.5" height="13" rx="1.2" fill="#f4c01c" stroke="#c4940c"/><rect x="1" y="1" width="11.5" height="4" rx="0.8" fill="#ffe98a"/><rect x="1" y="4.5" width="11.5" height="3.5" fill="#fad648"/><rect x="1" y="7.5" width="11.5" height="2.5" fill="#f7cb30"/><path d="M9.8 3.3c-2.2-.9-2.9.6-3.2 2.4L5.7 10.6c-.3 1.5-1.3 1.6-2.3 1.1M4.6 6.6h4.4" stroke="#3a2a08" stroke-width="1.3" fill="none" stroke-linecap="round"/></svg>
<span class="t" style="left:88.90px;top:271.25px;font-size:12px;line-height:16px;height:16px;color:#000;transform:scaleX(0.9511);">Relative Strength Index</span>
<svg style="left:67px;top:290px" width="17" height="16" viewBox="0 0 17 16"><rect x="0.5" y="0.5" width="12.5" height="13" rx="1.2" fill="#f4c01c" stroke="#c4940c"/><rect x="1" y="1" width="11.5" height="4" rx="0.8" fill="#ffe98a"/><rect x="1" y="4.5" width="11.5" height="3.5" fill="#fad648"/><rect x="1" y="7.5" width="11.5" height="2.5" fill="#f7cb30"/><path d="M9.8 3.3c-2.2-.9-2.9.6-3.2 2.4L5.7 10.6c-.3 1.5-1.3 1.6-2.3 1.1M4.6 6.6h4.4" stroke="#3a2a08" stroke-width="1.3" fill="none" stroke-linecap="round"/></svg>
<span class="t" style="left:88.90px;top:289.25px;font-size:12px;line-height:16px;height:16px;color:#000;transform:scaleX(0.9524);">Relative Vigor Index</span>
<svg style="left:67px;top:308px" width="17" height="16" viewBox="0 0 17 16"><rect x="0.5" y="0.5" width="12.5" height="13" rx="1.2" fill="#f4c01c" stroke="#c4940c"/><rect x="1" y="1" width="11.5" height="4" rx="0.8" fill="#ffe98a"/><rect x="1" y="4.5" width="11.5" height="3.5" fill="#fad648"/><rect x="1" y="7.5" width="11.5" height="2.5" fill="#f7cb30"/><path d="M9.8 3.3c-2.2-.9-2.9.6-3.2 2.4L5.7 10.6c-.3 1.5-1.3 1.6-2.3 1.1M4.6 6.6h4.4" stroke="#3a2a08" stroke-width="1.3" fill="none" stroke-linecap="round"/></svg>
<span class="t" style="left:88.90px;top:307.25px;font-size:12px;line-height:16px;height:16px;color:#000;transform:scaleX(0.9513);">Stochastic Oscillator</span>
<svg style="left:67px;top:326px" width="17" height="16" viewBox="0 0 17 16"><rect x="0.5" y="0.5" width="12.5" height="13" rx="1.2" fill="#f4c01c" stroke="#c4940c"/><rect x="1" y="1" width="11.5" height="4" rx="0.8" fill="#ffe98a"/><rect x="1" y="4.5" width="11.5" height="3.5" fill="#fad648"/><rect x="1" y="7.5" width="11.5" height="2.5" fill="#f7cb30"/><path d="M9.8 3.3c-2.2-.9-2.9.6-3.2 2.4L5.7 10.6c-.3 1.5-1.3 1.6-2.3 1.1M4.6 6.6h4.4" stroke="#3a2a08" stroke-width="1.3" fill="none" stroke-linecap="round"/></svg>
<span class="t" style="left:88.90px;top:325.25px;font-size:12px;line-height:16px;height:16px;color:#000;transform:scaleX(0.9637);">Triple Exponential Average</span>
<svg style="left:67px;top:344px" width="17" height="16" viewBox="0 0 17 16"><rect x="0.5" y="0.5" width="12.5" height="13" rx="1.2" fill="#f4c01c" stroke="#c4940c"/><rect x="1" y="1" width="11.5" height="4" rx="0.8" fill="#ffe98a"/><rect x="1" y="4.5" width="11.5" height="3.5" fill="#fad648"/><rect x="1" y="7.5" width="11.5" height="2.5" fill="#f7cb30"/><path d="M9.8 3.3c-2.2-.9-2.9.6-3.2 2.4L5.7 10.6c-.3 1.5-1.3 1.6-2.3 1.1M4.6 6.6h4.4" stroke="#3a2a08" stroke-width="1.3" fill="none" stroke-linecap="round"/></svg>
<span class="t" style="left:88.90px;top:343.25px;font-size:12px;line-height:16px;height:16px;color:#000;transform:scaleX(0.9567);">Williams&#x27; Percent Range</span>
<svg style="left:29px;top:366px" width="9" height="9" viewBox="0 0 9 9"><rect x="0.5" y="0.5" width="8" height="8" rx="1.5" fill="#f4f4f4" stroke="#919191"/><path d="M2.5 4.5h4" stroke="#2b4a8c" stroke-width="1.1"/><path d="M4.5 2.5v4" stroke="#2b4a8c" stroke-width="1.1"/></svg>
<svg style="left:46px;top:362px" width="17" height="16" viewBox="0 0 17 16"><rect x="0.5" y="0.5" width="12.5" height="13" rx="1.2" fill="#f4c01c" stroke="#c4940c"/><rect x="1" y="1" width="11.5" height="4" rx="0.8" fill="#ffe98a"/><rect x="1" y="4.5" width="11.5" height="3.5" fill="#fad648"/><rect x="1" y="7.5" width="11.5" height="2.5" fill="#f7cb30"/><path d="M9.8 3.3c-2.2-.9-2.9.6-3.2 2.4L5.7 10.6c-.3 1.5-1.3 1.6-2.3 1.1M4.6 6.6h4.4" stroke="#3a2a08" stroke-width="1.3" fill="none" stroke-linecap="round"/></svg>
<span class="t" style="left:67.90px;top:361.25px;font-size:12px;line-height:16px;height:16px;color:#000;transform:scaleX(0.9840);">Объемы</span>
<svg style="left:29px;top:384px" width="9" height="9" viewBox="0 0 9 9"><rect x="0.5" y="0.5" width="8" height="8" rx="1.5" fill="#f4f4f4" stroke="#919191"/><path d="M2.5 4.5h4" stroke="#2b4a8c" stroke-width="1.1"/><path d="M4.5 2.5v4" stroke="#2b4a8c" stroke-width="1.1"/></svg>
<svg style="left:46px;top:380px" width="17" height="16" viewBox="0 0 17 16"><rect x="0.5" y="0.5" width="12.5" height="13" rx="1.2" fill="#f4c01c" stroke="#c4940c"/><rect x="1" y="1" width="11.5" height="4" rx="0.8" fill="#ffe98a"/><rect x="1" y="4.5" width="11.5" height="3.5" fill="#fad648"/><rect x="1" y="7.5" width="11.5" height="2.5" fill="#f7cb30"/><path d="M9.8 3.3c-2.2-.9-2.9.6-3.2 2.4L5.7 10.6c-.3 1.5-1.3 1.6-2.3 1.1M4.6 6.6h4.4" stroke="#3a2a08" stroke-width="1.3" fill="none" stroke-linecap="round"/></svg>
<span class="t" style="left:67.90px;top:379.25px;font-size:12px;line-height:16px;height:16px;color:#000;transform:scaleX(0.9630);">Билла Вильямса</span>
<svg style="left:29px;top:402px" width="9" height="9" viewBox="0 0 9 9"><rect x="0.5" y="0.5" width="8" height="8" rx="1.5" fill="#f4f4f4" stroke="#919191"/><path d="M2.5 4.5h4" stroke="#2b4a8c" stroke-width="1.1"/><path d="M4.5 2.5v4" stroke="#2b4a8c" stroke-width="1.1"/></svg>
<svg style="left:46px;top:398px" width="17" height="16" viewBox="0 0 17 16"><rect x="0.5" y="0.5" width="12.5" height="13" rx="1.2" fill="#f4c01c" stroke="#c4940c"/><rect x="1" y="1" width="11.5" height="4" rx="0.8" fill="#ffe98a"/><rect x="1" y="4.5" width="11.5" height="3.5" fill="#fad648"/><rect x="1" y="7.5" width="11.5" height="2.5" fill="#f7cb30"/><path d="M9.8 3.3c-2.2-.9-2.9.6-3.2 2.4L5.7 10.6c-.3 1.5-1.3 1.6-2.3 1.1M4.6 6.6h4.4" stroke="#3a2a08" stroke-width="1.3" fill="none" stroke-linecap="round"/><rect x="8.5" y="9" width="8" height="6.5" rx="1" fill="#f6dc7a" stroke="#b8941c"/><rect x="8.5" y="8" width="4" height="2" fill="#f6dc7a" stroke="#b8941c" stroke-width="0.8"/></svg>
<span class="t" style="left:67.90px;top:397.25px;font-size:12px;line-height:16px;height:16px;color:#000;transform:scaleX(0.9205);">Examples</span>
<svg style="left:8px;top:420px" width="9" height="9" viewBox="0 0 9 9"><rect x="0.5" y="0.5" width="8" height="8" rx="1.5" fill="#f4f4f4" stroke="#919191"/><path d="M2.5 4.5h4" stroke="#2b4a8c" stroke-width="1.1"/></svg>
<svg style="left:24px;top:413px" width="18" height="18" viewBox="0 0 18 18"><ellipse cx="7.5" cy="13" rx="6" ry="4" fill="#2f6fd8"/><circle cx="8" cy="8" r="3.3" fill="#d8b070"/>
<path d="M1 4.5L8.5 1.5 16 4.5 8.5 7.5z" fill="#3c3c3c"/><path d="M4.5 6v2.3c2.5 1.3 5.5 1.3 8 0V6" fill="#555"/><path d="M13 10l3.5 3.5-3.5 3.5-3.5-3.5z" fill="#f0d060" stroke="#a88418" stroke-width="0.8"/></svg>
<span class="t" style="left:47.00px;top:415.25px;font-size:12px;line-height:16px;height:16px;color:#000;">Советники</span>
<svg style="left:29px;top:438px" width="9" height="9" viewBox="0 0 9 9"><rect x="0.5" y="0.5" width="8" height="8" rx="1.5" fill="#f4f4f4" stroke="#919191"/><path d="M2.5 4.5h4" stroke="#2b4a8c" stroke-width="1.1"/><path d="M4.5 2.5v4" stroke="#2b4a8c" stroke-width="1.1"/></svg>
<svg style="left:45px;top:431px" width="18" height="18" viewBox="0 0 18 18"><ellipse cx="7.5" cy="13" rx="6" ry="4" fill="#2f6fd8"/><circle cx="8" cy="8" r="3.3" fill="#d8b070"/>
<path d="M1 4.5L8.5 1.5 16 4.5 8.5 7.5z" fill="#3c3c3c"/><path d="M4.5 6v2.3c2.5 1.3 5.5 1.3 8 0V6" fill="#555"/><rect x="7.5" y="10.5" width="9" height="7" fill="#4a90e0" stroke="#1c5cb0"/><path d="M10 13.5l2 2 2-2" stroke="#fff" stroke-width="1.2" fill="none"/></svg>
<span class="t" style="left:67.90px;top:433.25px;font-size:12px;line-height:16px;height:16px;color:#000;transform:scaleX(0.9952);">Market</span>
</div>
<div style="left:370px;top:154px;width:17px;height:449px;background:#f0f0f0;"></div>
<div style="left:370px;top:171px;width:15px;height:285px;background:#cdcdcd;"></div>
<svg style="left:373px;top:158px;" width="10" height="8" viewBox="0 0 10 8"><path d="M1.3 6.4L4.8 2.6l3.5 3.8" stroke="#505050" stroke-width="2" fill="none"/></svg>
<svg style="left:373px;top:590px;" width="10" height="8" viewBox="0 0 10 8"><path d="M1.3 1.8l3.5 3.8 3.5-3.8" stroke="#505050" stroke-width="2" fill="none"/></svg>
<div style="left:197px;top:603px;width:190px;height:1px;background:#000;"></div>
<div style="left:200px;top:603px;width:60px;height:20px;background:#ffffff;border:1px solid #000;border-top:none;box-sizing:border-box;"></div>
<span class="t" style="left:210.00px;top:605.25px;font-size:12px;line-height:16px;height:16px;color:#000;transform:scaleX(1.0138);">Общие</span>
<span class="t" style="left:270.40px;top:605.25px;font-size:12px;line-height:16px;height:16px;color:#7a7a7a;transform:scaleX(0.9942);">Избранное</span>
<div style="left:0px;top:628px;width:391px;height:1px;background:#b0b0b0;"></div>
<div style="left:391px;top:628px;width:884px;height:1px;background:#d6d6d6;"></div>
<div style="left:0px;top:629px;width:1275px;height:1px;background:#fbfbfb;"></div>
<div style="left:392px;top:138px;width:883px;height:471px;background:#ffffff;"></div>
<div style="left:1274px;top:138px;width:1px;height:471px;background:#c4c4c4;"></div>
<div style="left:391px;top:609px;width:884px;height:1px;background:#000000;"></div>
<div style="left:392px;top:607px;width:882px;height:1px;background:#dadada;"></div>
<svg style="left:0;top:0" width="1275" height="640" viewBox="0 0 1275 640" shape-rendering="crispEdges"><path d="M395 160.5H1221" stroke="#344c4c" stroke-width="1" stroke-dasharray="3 3" stroke-dashoffset="1"/><path d="M395 193.5H1221" stroke="#344c4c" stroke-width="1" stroke-dasharray="3 3" stroke-dashoffset="1"/><path d="M395 225.5H1221" stroke="#344c4c" stroke-width="1" stroke-dasharray="3 3" stroke-dashoffset="1"/><path d="M395 258.5H1221" stroke="#344c4c" stroke-width="1" stroke-dasharray="3 3" stroke-dashoffset="1"/><path d="M395 290.5H1221" stroke="#344c4c" stroke-width="1" stroke-dasharray="3 3" stroke-dashoffset="1"/><path d="M395 322.5H1221" stroke="#344c4c" stroke-width="1" stroke-dasharray="3 3" stroke-dashoffset="1"/><path d="M395 355.5H1221" stroke="#344c4c" stroke-width="1" stroke-dasharray="3 3" stroke-dashoffset="1"/><path d="M395 387.5H1221" stroke="#344c4c" stroke-width="1" stroke-dasharray="3 3" stroke-dashoffset="1"/><path d="M395 420.5H1221" stroke="#344c4c" stroke-width="1" stroke-dasharray="3 3" stroke-dashoffset="1"/><path d="M395 452.5H1221" stroke="#344c4c" stroke-width="1" stroke-dasharray="3 3" stroke-dashoffset="1"/><path d="M395 485.5H1221" stroke="#344c4c" stroke-width="1" stroke-dasharray="3 3" stroke-dashoffset="1"/><path d="M395 517.5H1221" stroke="#344c4c" stroke-width="1" stroke-dasharray="3 3" stroke-dashoffset="1"/><path d="M395 550.5H1221" stroke="#344c4c" stroke-width="1" stroke-dasharray="3 3" stroke-dashoffset="1"/><path d="M426.5 141V586" stroke="#344c4c" stroke-width="1" stroke-dasharray="3 3" stroke-dashoffset="1"/><path d="M458.5 141V586" stroke="#344c4c" stroke-width="1" stroke-dasharray="3 3" stroke-dashoffset="1"/><path d="M490.5 141V586" stroke="#344c4c" stroke-width="1" stroke-dasharray="3 3" stroke-dashoffset="1"/><path d="M522.5 141V586" stroke="#344c4c" stroke-width="1" stroke-dasharray="3 3" stroke-dashoffset="1"/><path d="M554.5 141V586" stroke="#344c4c" stroke-width="1" stroke-dasharray="3 3" stroke-dashoffset="1"/><path d="M586.5 141V586" stroke="#344c4c" stroke-width="1" stroke-dasharray="3 3" stroke-dashoffset="1"/><path d="M618.5 141V586" stroke="#344c4c" stroke-width="1" stroke-dasharray="3 3" stroke-dashoffset="1"/><path d="M650.5 141V586" stroke="#344c4c" stroke-width="1" stroke-dasharray="3 3" stroke-dashoffset="1"/><path d="M682.5 141V586" stroke="#344c4c" stroke-width="1" stroke-dasharray="3 3" stroke-dashoffset="1"/><path d="M714.5 141V586" stroke="#344c4c" stroke-width="1" stroke-dasharray="3 3" stroke-dashoffset="1"/><path d="M746.5 141V586" stroke="#344c4c" stroke-width="1" stroke-dasharray="3 3" stroke-dashoffset="1"/><path d="M778.5 141V586" stroke="#344c4c" stroke-width="1" stroke-dasharray="3 3" stroke-dashoffset="1"/><path d="M810.5 141V586" stroke="#344c4c" stroke-width="1" stroke-dasharray="3 3" stroke-dashoffset="1"/><path d="M842.5 141V586" stroke="#344c4c" stroke-width="1" stroke-dasharray="3 3" stroke-dashoffset="1"/><path d="M874.5 141V586" stroke="#344c4c" stroke-width="1" stroke-dasharray="3 3" stroke-dashoffset="1"/><path d="M906.5 141V586" stroke="#344c4c" stroke-width="1" stroke-dasharray="3 3" stroke-dashoffset="1"/><path d="M938.5 141V586" stroke="#344c4c" stroke-width="1" stroke-dasharray="3 3" stroke-dashoffset="1"/><path d="M970.5 141V586" stroke="#344c4c" stroke-width="1" stroke-dasharray="3 3" stroke-dashoffset="1"/><path d="M1002.5 141V586" stroke="#344c4c" stroke-width="1" stroke-dasharray="3 3" stroke-dashoffset="1"/><path d="M1034.5 141V586" stroke="#344c4c" stroke-width="1" stroke-dasharray="3 3" stroke-dashoffset="1"/><path d="M1066.5 141V586" stroke="#344c4c" stroke-width="1" stroke-dasharray="3 3" stroke-dashoffset="1"/><path d="M1098.5 141V586" stroke="#344c4c" stroke-width="1" stroke-dasharray="3 3" stroke-dashoffset="1"/><path d="M1130.5 141V586" stroke="#344c4c" stroke-width="1" stroke-dasharray="3 3" stroke-dashoffset="1"/><path d="M1162.5 141V586" stroke="#344c4c" stroke-width="1" stroke-dasharray="3 3" stroke-dashoffset="1"/><path d="M1194.5 141V586" stroke="#344c4c" stroke-width="1" stroke-dasharray="3 3" stroke-dashoffset="1"/><path d="M395 185.5H1221" stroke="#2f4f4f" stroke-width="1"/><path d="M395 327.5H407" stroke="#000" stroke-width="1"/><rect x="425" y="579.0" width="2" height="7.0" fill="#008000"/><rect x="457" y="563.5" width="2" height="22.5" fill="#008000"/><rect x="489" y="578.0" width="2" height="8.0" fill="#008000"/><rect x="521" y="577.0" width="2" height="9.0" fill="#008000"/><rect x="553" y="573.5" width="2" height="12.5" fill="#008000"/><rect x="585" y="573.0" width="2" height="13.0" fill="#008000"/><rect x="617" y="579.0" width="2" height="7.0" fill="#008000"/><rect x="649" y="577.0" width="2" height="9.0" fill="#008000"/><rect x="681" y="577.0" width="2" height="9.0" fill="#008000"/><rect x="713" y="576.5" width="2" height="9.5" fill="#008000"/><rect x="745" y="578.0" width="2" height="8.0" fill="#008000"/><rect x="777" y="578.0" width="2" height="8.0" fill="#008000"/><rect x="809" y="580.5" width="2" height="5.5" fill="#008000"/><rect x="841" y="582.0" width="2" height="4.0" fill="#008000"/><rect x="873" y="578.5" width="2" height="7.5" fill="#008000"/><rect x="905" y="581.0" width="2" height="5.0" fill="#008000"/><rect x="937" y="578.5" width="2" height="7.5" fill="#008000"/><rect x="969" y="580.0" width="2" height="6.0" fill="#008000"/><rect x="1001" y="581.5" width="2" height="4.5" fill="#008000"/><rect x="1033" y="578.0" width="2" height="8.0" fill="#008000"/><rect x="1065" y="574.0" width="2" height="12.0" fill="#008000"/><rect x="1097" y="578.0" width="2" height="8.0" fill="#008000"/><rect x="1129" y="578.0" width="2" height="8.0" fill="#008000"/><rect x="1161" y="541.0" width="2" height="45.0" fill="#008000"/><path d="M586.5 420V433" stroke="#000" stroke-width="1"/><rect x="575.5" y="420.5" width="22" height="12" fill="#ff0000" stroke="#000" stroke-width="1"/><path d="M618.5 420V453" stroke="#000" stroke-width="1"/><rect x="607.5" y="428.5" width="22" height="4" fill="#ff0000" stroke="#000" stroke-width="1"/><path d="M650.5 408V445" stroke="#000" stroke-width="1"/><rect x="639.5" y="408.5" width="22" height="24" fill="#008000" stroke="#000" stroke-width="1"/><path d="M682.5 399V498" stroke="#000" stroke-width="1"/><rect x="671.5" y="408.5" width="22" height="81" fill="#ff0000" stroke="#000" stroke-width="1"/><path d="M714.5 464V531" stroke="#000" stroke-width="1"/><rect x="703.5" y="489.5" width="22" height="36" fill="#ff0000" stroke="#000" stroke-width="1"/><path d="M746.5 483V527" stroke="#000" stroke-width="1"/><rect x="735.5" y="493.5" width="22" height="28" fill="#008000" stroke="#000" stroke-width="1"/><path d="M778.5 456V522" stroke="#000" stroke-width="1"/><rect x="767.5" y="464.5" width="22" height="33" fill="#008000" stroke="#000" stroke-width="1"/><path d="M810.5 456V496" stroke="#000" stroke-width="1"/><rect x="799.5" y="464.5" width="22" height="17" fill="#ff0000" stroke="#000" stroke-width="1"/><path d="M842.5 456V484" stroke="#000" stroke-width="1"/><rect x="831.5" y="456.5" width="22" height="25" fill="#008000" stroke="#000" stroke-width="1"/><path d="M874.5 420V457" stroke="#000" stroke-width="1"/><rect x="863.5" y="428.5" width="22" height="24" fill="#008000" stroke="#000" stroke-width="1"/><path d="M906.5 411V442" stroke="#000" stroke-width="1"/><rect x="895.5" y="424.5" width="22" height="4" fill="#008000" stroke="#000" stroke-width="1"/><path d="M938.5 386V430" stroke="#000" stroke-width="1"/><rect x="927.5" y="391.5" width="22" height="33" fill="#008000" stroke="#000" stroke-width="1"/><path d="M970.5 380V406" stroke="#000" stroke-width="1"/><rect x="959.5" y="387.5" width="22" height="8" fill="#008000" stroke="#000" stroke-width="1"/><path d="M1002.5 375V396" stroke="#000" stroke-width="1"/><rect x="991.5" y="379.5" width="22" height="8" fill="#008000" stroke="#000" stroke-width="1"/><path d="M1034.5 369V420" stroke="#000" stroke-width="1"/><rect x="1023.5" y="375.5" width="22" height="33" fill="#ff0000" stroke="#000" stroke-width="1"/><path d="M1066.5 386V444" stroke="#000" stroke-width="1"/><rect x="1055.5" y="404.5" width="22" height="32" fill="#ff0000" stroke="#000" stroke-width="1"/><path d="M1098.5 411V454" stroke="#000" stroke-width="1"/><rect x="1087.5" y="440.5" width="22" height="4" fill="#ff0000" stroke="#000" stroke-width="1"/><path d="M1130.5 420V466" stroke="#000" stroke-width="1"/><rect x="1119.5" y="440.5" width="22" height="8" fill="#008000" stroke="#000" stroke-width="1"/><path d="M1162.5 140V456" stroke="#000" stroke-width="1"/><rect x="1151.5" y="185.5" width="22" height="247" fill="#008000" stroke="#000" stroke-width="1"/><path d="M682.5 431V438" stroke="#e4553a" stroke-width="1" stroke-dasharray="2 2" opacity="0.6"/><path d="M714.5 500V519" stroke="#e4553a" stroke-width="1" stroke-dasharray="2 2" opacity="0.6"/><path d="M1034.5 390V410" stroke="#e4553a" stroke-width="1" stroke-dasharray="2 2" opacity="0.6"/><path d="M1066.5 408V446" stroke="#1f6fc2" stroke-width="1" stroke-dasharray="2 2" opacity="0.7"/><path d="M1099.5 428.5L1130 451.5" stroke="#1f6fc2" stroke-width="1" stroke-dasharray="3 3"/><path d="M650.5 406.90000000000003l3.5-3.5h-2v-2.7h-3v2.7h-2z" fill="#e4553a"/><path d="M650.5 417.7l3.5 3.5h-2v2.7h-3v-2.7h-2z" fill="#fff" stroke="#fff" stroke-width="2" stroke-linejoin="miter"/><path d="M650.5 417.7l3.5 3.5h-2v2.7h-3v-2.7h-2z" fill="#1f6fc2"/><path d="M682.5 430.70000000000005l3.5-3.5h-2v-2.7h-3v2.7h-2z" fill="#fff" stroke="#fff" stroke-width="2" stroke-linejoin="miter"/><path d="M682.5 430.70000000000005l3.5-3.5h-2v-2.7h-3v2.7h-2z" fill="#e4553a"/><path d="M682.5 437.9l3.5 3.5h-2v2.7h-3v-2.7h-2z" fill="#fff" stroke="#fff" stroke-width="2" stroke-linejoin="miter"/><path d="M682.5 437.9l3.5 3.5h-2v2.7h-3v-2.7h-2z" fill="#1f6fc2"/><path d="M714.5 499.70000000000005l3.5-3.5h-2v-2.7h-3v2.7h-2z" fill="#fff" stroke="#fff" stroke-width="2" stroke-linejoin="miter"/><path d="M714.5 499.70000000000005l3.5-3.5h-2v-2.7h-3v2.7h-2z" fill="#e4553a"/><path d="M714.5 518.9l3.5 3.5h-2v2.7h-3v-2.7h-2z" fill="#fff" stroke="#fff" stroke-width="2" stroke-linejoin="miter"/><path d="M714.5 518.9l3.5 3.5h-2v2.7h-3v-2.7h-2z" fill="#1f6fc2"/><path d="M1034.5 389.40000000000003l3.5-3.5h-2v-2.7h-3v2.7h-2z" fill="#fff" stroke="#fff" stroke-width="2" stroke-linejoin="miter"/><path d="M1034.5 389.40000000000003l3.5-3.5h-2v-2.7h-3v2.7h-2z" fill="#e4553a"/><path d="M1034.5 410.09999999999997l3.5 3.5h-2v2.7h-3v-2.7h-2z" fill="#1f6fc2"/><path d="M1066.5 401.29999999999995l3.5 3.5h-2v2.7h-3v-2.7h-2z" fill="#fff" stroke="#fff" stroke-width="2" stroke-linejoin="miter"/><path d="M1066.5 401.29999999999995l3.5 3.5h-2v2.7h-3v-2.7h-2z" fill="#1f6fc2"/><path d="M1066.5 430.5l3.5-3.5h-2v-2.7h-3v2.7h-2z" fill="#fff" stroke="#fff" stroke-width="2" stroke-linejoin="miter"/><path d="M1066.5 430.5l3.5-3.5h-2v-2.7h-3v2.7h-2z" fill="#e4553a"/><path d="M1066.5 438.3l3.5-3.5h-2v-2.7h-3v2.7h-2z" fill="#fff" stroke="#fff" stroke-width="2" stroke-linejoin="miter"/><path d="M1066.5 438.3l3.5-3.5h-2v-2.7h-3v2.7h-2z" fill="#e4553a"/><path d="M1066.5 445.7l3.5 3.5h-2v2.7h-3v-2.7h-2z" fill="#1f6fc2"/><path d="M1099.5 425.5l3.5 3.5h-2v2.7h-3v-2.7h-2z" fill="#1f6fc2"/><path d="M1130.5 454.70000000000005l3.5-3.5h-2v-2.7h-3v2.7h-2z" fill="#fff" stroke="#fff" stroke-width="2" stroke-linejoin="miter"/><path d="M1130.5 454.70000000000005l3.5-3.5h-2v-2.7h-3v2.7h-2z" fill="#e4553a"/><path d="M394.5 140V587M394 140.5H1222M1221.5 140V587M394 586.5H1222" stroke="#000" stroke-width="1" fill="none"/><path d="M1222 160.5H1226" stroke="#000"/><path d="M1222 193.5H1226" stroke="#000"/><path d="M1222 225.5H1226" stroke="#000"/><path d="M1222 258.5H1226" stroke="#000"/><path d="M1222 290.5H1226" stroke="#000"/><path d="M1222 322.5H1226" stroke="#000"/><path d="M1222 355.5H1226" stroke="#000"/><path d="M1222 387.5H1226" stroke="#000"/><path d="M1222 420.5H1226" stroke="#000"/><path d="M1222 452.5H1226" stroke="#000"/><path d="M1222 485.5H1226" stroke="#000"/><path d="M1222 517.5H1226" stroke="#000"/><path d="M1222 550.5H1226" stroke="#000"/><path d="M394.5 587V591" stroke="#000"/><path d="M458.5 587V591" stroke="#000"/><path d="M522.5 587V591" stroke="#000"/><path d="M586.5 587V591" stroke="#000"/><path d="M650.5 587V591" stroke="#000"/><path d="M714.5 587V591" stroke="#000"/><path d="M778.5 587V591" stroke="#000"/><path d="M842.5 587V591" stroke="#000"/><path d="M906.5 587V591" stroke="#000"/><path d="M970.5 587V591" stroke="#000"/><path d="M1034.5 587V591" stroke="#000"/><path d="M1098.5 587V591" stroke="#000"/><path d="M1162.5 587V591" stroke="#000"/></svg>
<span class="t" style="left:1227.00px;top:154.25px;font-size:10px;line-height:13px;height:13px;color:#000;transform:scaleX(0.8963) rotate(0.03deg);-webkit-text-stroke:0.3px #000;">3151.00</span>
<span class="t" style="left:1227.00px;top:187.25px;font-size:10px;line-height:13px;height:13px;color:#000;transform:scaleX(0.8963) rotate(0.03deg);-webkit-text-stroke:0.3px #000;">3149.00</span>
<span class="t" style="left:1227.00px;top:219.25px;font-size:10px;line-height:13px;height:13px;color:#000;transform:scaleX(0.8963) rotate(0.03deg);-webkit-text-stroke:0.3px #000;">3147.00</span>
<span class="t" style="left:1227.00px;top:252.25px;font-size:10px;line-height:13px;height:13px;color:#000;transform:scaleX(0.8963) rotate(0.03deg);-webkit-text-stroke:0.3px #000;">3145.00</span>
<span class="t" style="left:1227.00px;top:284.25px;font-size:10px;line-height:13px;height:13px;color:#000;transform:scaleX(0.8963) rotate(0.03deg);-webkit-text-stroke:0.3px #000;">3143.00</span>
<span class="t" style="left:1227.00px;top:316.25px;font-size:10px;line-height:13px;height:13px;color:#000;transform:scaleX(0.8963) rotate(0.03deg);-webkit-text-stroke:0.3px #000;">3141.00</span>
<span class="t" style="left:1227.00px;top:349.25px;font-size:10px;line-height:13px;height:13px;color:#000;transform:scaleX(0.8963) rotate(0.03deg);-webkit-text-stroke:0.3px #000;">3139.00</span>
<span class="t" style="left:1227.00px;top:381.25px;font-size:10px;line-height:13px;height:13px;color:#000;transform:scaleX(0.8963) rotate(0.03deg);-webkit-text-stroke:0.3px #000;">3137.00</span>
<span class="t" style="left:1227.00px;top:414.25px;font-size:10px;line-height:13px;height:13px;color:#000;transform:scaleX(0.8963) rotate(0.03deg);-webkit-text-stroke:0.3px #000;">3135.00</span>
<span class="t" style="left:1227.00px;top:446.25px;font-size:10px;line-height:13px;height:13px;color:#000;transform:scaleX(0.8963) rotate(0.03deg);-webkit-text-stroke:0.3px #000;">3133.00</span>
<span class="t" style="left:1227.00px;top:479.25px;font-size:10px;line-height:13px;height:13px;color:#000;transform:scaleX(0.8963) rotate(0.03deg);-webkit-text-stroke:0.3px #000;">3131.00</span>
<span class="t" style="left:1227.00px;top:511.25px;font-size:10px;line-height:13px;height:13px;color:#000;transform:scaleX(0.8963) rotate(0.03deg);-webkit-text-stroke:0.3px #000;">3129.00</span>
<span class="t" style="left:1227.00px;top:544.25px;font-size:10px;line-height:13px;height:13px;color:#000;transform:scaleX(0.8963) rotate(0.03deg);-webkit-text-stroke:0.3px #000;">3127.00</span>
<div style="left:1224px;top:180px;width:39px;height:11px;background:#2f4f4f;"></div>
<span class="t" style="left:1227.00px;top:179.25px;font-size:10px;line-height:13px;height:13px;color:#fff;transform:scaleX(0.8963) rotate(0.03deg);">3149.50</span>
<span class="t" style="left:393.60px;top:589.25px;font-size:10px;line-height:13px;height:13px;color:#000;transform:scaleX(0.8992) rotate(0.03deg);-webkit-text-stroke:0.3px #000;">5 Jun 2020</span>
<span class="t" style="left:457.60px;top:589.25px;font-size:10px;line-height:13px;height:13px;color:#000;transform:scaleX(0.9107) rotate(0.03deg);-webkit-text-stroke:0.3px #000;">5 Jun 08:50</span>
<span class="t" style="left:521.60px;top:589.25px;font-size:10px;line-height:13px;height:13px;color:#000;transform:scaleX(0.9107) rotate(0.03deg);-webkit-text-stroke:0.3px #000;">5 Jun 09:10</span>
<span class="t" style="left:585.60px;top:589.25px;font-size:10px;line-height:13px;height:13px;color:#000;transform:scaleX(0.9107) rotate(0.03deg);-webkit-text-stroke:0.3px #000;">5 Jun 09:30</span>
<span class="t" style="left:649.60px;top:589.25px;font-size:10px;line-height:13px;height:13px;color:#000;transform:scaleX(0.9107) rotate(0.03deg);-webkit-text-stroke:0.3px #000;">5 Jun 09:50</span>
<span class="t" style="left:713.60px;top:589.25px;font-size:10px;line-height:13px;height:13px;color:#000;transform:scaleX(0.9107) rotate(0.03deg);-webkit-text-stroke:0.3px #000;">5 Jun 10:10</span>
<span class="t" style="left:777.60px;top:589.25px;font-size:10px;line-height:13px;height:13px;color:#000;transform:scaleX(0.9107) rotate(0.03deg);-webkit-text-stroke:0.3px #000;">5 Jun 10:30</span>
<span class="t" style="left:841.60px;top:589.25px;font-size:10px;line-height:13px;height:13px;color:#000;transform:scaleX(0.9107) rotate(0.03deg);-webkit-text-stroke:0.3px #000;">5 Jun 10:50</span>
<span class="t" style="left:905.60px;top:589.25px;font-size:10px;line-height:13px;height:13px;color:#000;transform:scaleX(0.9107) rotate(0.03deg);-webkit-text-stroke:0.3px #000;">5 Jun 11:10</span>
<span class="t" style="left:969.60px;top:589.25px;font-size:10px;line-height:13px;height:13px;color:#000;transform:scaleX(0.9107) rotate(0.03deg);-webkit-text-stroke:0.3px #000;">5 Jun 11:30</span>
<span class="t" style="left:1033.60px;top:589.25px;font-size:10px;line-height:13px;height:13px;color:#000;transform:scaleX(0.9107) rotate(0.03deg);-webkit-text-stroke:0.3px #000;">5 Jun 11:50</span>
<span class="t" style="left:1097.60px;top:589.25px;font-size:10px;line-height:13px;height:13px;color:#000;transform:scaleX(0.9107) rotate(0.03deg);-webkit-text-stroke:0.3px #000;">5 Jun 12:10</span>
<span class="t" style="left:1161.60px;top:589.25px;font-size:10px;line-height:13px;height:13px;color:#000;transform:scaleX(0.9107) rotate(0.03deg);-webkit-text-stroke:0.3px #000;">5 Jun 12:30</span>
<svg style="left:398px;top:143px;" width="16" height="15" viewBox="0 0 16 15"><rect x="0.6" y="1.4" width="13.8" height="12" rx="1.6" fill="#fff" stroke="#4a4a4a" stroke-width="1"/>
<path d="M0.6 3.4v-0.6a1.6 1.6 0 0 1 1.6-1.6h10.6a1.6 1.6 0 0 1 1.6 1.6v0.6z" fill="#7474f6"/><path d="M1.6 2.9h11.8" stroke="#d8d8ff" stroke-width="0.6"/>
<path d="M2.1 5.5h4.7M2.1 7.5h4.7M2.1 9.5h4.7M2.1 11.5h4.7" stroke="#f08484" stroke-width="1.2"/><path d="M8.2 5.5h4.7M8.2 7.5h4.7M8.2 9.5h4.7M8.2 11.5h4.7" stroke="#8484f0" stroke-width="1.2"/></svg>
<svg style="left:415px;top:144px;" width="16" height="13" viewBox="0 0 16 13"><path d="M0.3 2.3a1.3 1.3 0 0 1 1.3-1.3h0.7a1.3 1.3 0 0 1 1.3 1.3v3.2h1.8a1.3 1.3 0 0 1 1.3 1.3v3.7a1.3 1.3 0 0 1-1.3 1.3H1.6a1.3 1.3 0 0 1-1.3-1.3z" fill="#2c2cec" stroke="#1a1ab4" stroke-width="0.6"/>
<path d="M14.9 2.3a1.3 1.3 0 0 0-1.3-1.3h-0.7a1.3 1.3 0 0 0-1.3 1.3v3.2H9.8a1.3 1.3 0 0 0-1.3 1.3v3.7a1.3 1.3 0 0 0 1.3 1.3h3.8a1.3 1.3 0 0 0 1.3-1.3z" fill="#e23c3c" stroke="#a82222" stroke-width="0.6"/>
<path d="M1.2 10.4h4.6" stroke="#9090ff" stroke-width="0.9"/><path d="M9.4 10.4h4.6" stroke="#ffa0a0" stroke-width="0.9"/>
<path d="M5 1.5h4.8" stroke="#686868" stroke-width="0.9"/><path d="M5 3.3h4.8" stroke="#8e8e8e" stroke-width="0.9"/></svg>
<span class="t" style="left:435.70px;top:144.25px;font-size:10px;line-height:13px;height:13px;color:#000;transform:scaleX(0.9299) rotate(0.03deg);-webkit-text-stroke:0.3px #000;">MESM20, M10</span>
<span class="t" style="left:1101.80px;top:145.25px;font-size:10px;line-height:13px;height:13px;color:#000;transform:scaleX(0.9400) rotate(0.03deg);-webkit-text-stroke:0.3px #000;">TradePanelCME.1.0.8+</span>
<svg style="left:1203px;top:142px;" width="18" height="17" viewBox="0 0 18 17"><ellipse cx="6.5" cy="12" rx="6" ry="4" fill="#a4c8ee"/><circle cx="7.5" cy="8" r="3" fill="#d0a868"/><path d="M7 10.5l1.5 4" stroke="#e8c040" stroke-width="1.4"/>
<path d="M0.5 4.2L8 1.2l7.5 3L8 7.2z" fill="#6e6e6e"/><path d="M4 5.6v2.4c2.5 1.2 5.5 1.2 8 0V5.6" fill="#8a8a8a"/>
<circle cx="12.8" cy="11.8" r="4.3" fill="#4cb02c" stroke="#2a7a1a" stroke-width="0.9"/><circle cx="12.8" cy="11.8" r="3" fill="#7ad24a"/><path d="M11.8 9.6v4.4l3.2-2.2z" fill="#ffffff"/></svg>
<div style="left:415px;top:161px;width:176px;height:340px;background:#555555;border:1px solid #2e2e2e;box-sizing:border-box;"></div>
<div style="left:420px;top:166px;width:128px;height:15px;background:#c8c8c8;border:1px solid #000;box-sizing:border-box;"></div>
<div style="left:423px;top:169px;width:50px;height:9px;background:#6b8e23;"></div>
<span class="t" style="left:472.50px;top:169.25px;font-size:6.5px;line-height:9px;height:9px;color:#8a8a8a;font-weight:bold;transform:scaleX(0.9481);">ТАЙМЕР</span>
<div style="left:552px;top:166px;width:15px;height:15px;background:#c8c8c8;border:1px solid #000;box-sizing:border-box;"></div>
<div style="left:570px;top:166px;width:15px;height:15px;background:#c8c8c8;border:1px solid #000;box-sizing:border-box;"></div>
<span class="t" style="left:574.20px;top:164.25px;font-size:14px;line-height:18px;height:18px;color:#111;transform:scaleX(0.9146);">x</span>
<div style="left:420px;top:186px;width:77px;height:25px;background:#c8e6c9;border:1px solid #000;box-sizing:border-box;"></div>
<span class="t" style="left:433.58px;top:189.25px;font-size:14px;line-height:18px;height:18px;color:#111;transform:scaleX(0.9146);">00:05:50</span>
<div style="left:508px;top:186px;width:77px;height:25px;background:#c8c8c8;border:1px solid #000;box-sizing:border-box;"></div>
<span class="t" style="left:519.97px;top:189.25px;font-size:14px;line-height:18px;height:18px;color:#111;transform:scaleX(0.9146);">MESM20</span>
<div style="left:420px;top:216px;width:77px;height:30px;background:#c8c8c8;border:1px solid #000;box-sizing:border-box;"></div>
<span class="t" style="left:427.55px;top:222.25px;font-size:14px;line-height:18px;height:18px;color:#111;transform:scaleX(0.9146);">Buy MRKT</span>
<div style="left:508px;top:216px;width:77px;height:30px;background:#c8c8c8;border:1px solid #000;box-sizing:border-box;"></div>
<span class="t" style="left:515.71px;top:222.25px;font-size:14px;line-height:18px;height:18px;color:#111;transform:scaleX(0.9146);">Sell MRKT</span>
<div style="left:420px;top:251px;width:77px;height:30px;background:#5fdc64;border:1px solid #000;box-sizing:border-box;"></div>
<span class="t" style="left:429.33px;top:257.25px;font-size:14px;line-height:18px;height:18px;color:#111;transform:scaleX(0.9146);">Buy LIMIT</span>
<div style="left:508px;top:251px;width:77px;height:30px;background:#fa8cc8;border:1px solid #000;box-sizing:border-box;"></div>
<span class="t" style="left:517.48px;top:257.25px;font-size:14px;line-height:18px;height:18px;color:#111;transform:scaleX(0.9146);">Sell LIMIT</span>
<div style="left:420px;top:286px;width:77px;height:30px;background:#c8c8c8;border:1px solid #000;box-sizing:border-box;"></div>
<span class="t" style="left:430.72px;top:292.25px;font-size:14px;line-height:18px;height:18px;color:#111;transform:scaleX(0.9146);">Разворот</span>
<div style="left:508px;top:286px;width:77px;height:30px;background:#e8965f;border:1px solid #000;box-sizing:border-box;"></div>
<span class="t" style="left:521.64px;top:292.25px;font-size:14px;line-height:18px;height:18px;color:#111;transform:scaleX(0.9146);">Закрыть</span>
<div style="left:420px;top:321px;width:95px;height:20px;background:#c8c8c8;border:1px solid #000;box-sizing:border-box;"></div>
<span class="t" style="left:449.79px;top:324.25px;font-size:11px;line-height:14px;height:14px;color:#111;">Объем</span>
<div style="left:420px;top:340px;width:20px;height:20px;background:#c8c8c8;border:1px solid #000;box-sizing:border-box;"></div>
<span class="t" style="left:427.84px;top:341.25px;font-size:13px;line-height:17px;height:17px;color:#111;">-</span>
<div style="left:439px;top:340px;width:57px;height:20px;border:1px solid #000;box-sizing:border-box;background:linear-gradient(100deg,#ececec,#e1e1e1);"></div>
<span class="t" style="left:462.12px;top:341.25px;font-size:13px;line-height:17px;height:17px;color:#111;transform:scaleX(0.9350);">6</span>
<div style="left:495px;top:340px;width:20px;height:20px;background:#c8c8c8;border:1px solid #000;box-sizing:border-box;"></div>
<span class="t" style="left:501.20px;top:341.25px;font-size:13px;line-height:17px;height:17px;color:#111;">+</span>
<div style="left:525px;top:321px;width:60px;height:39px;background:#c8c8c8;border:1px solid #000;box-sizing:border-box;"></div>
<span class="t" style="left:542.34px;top:328.25px;font-size:21px;line-height:25px;height:25px;color:#111;transform:scaleX(0.9333);">БУ</span>
<div style="left:420px;top:366px;width:40px;height:40px;background:#22b322;border:1px solid #000;box-sizing:border-box;"></div>
<span class="t" style="left:429.19px;top:379.25px;font-size:11px;line-height:14px;height:14px;color:#111;">Вкл.</span>
<div style="left:459px;top:366px;width:87px;height:20px;background:#c8c8c8;border:1px solid #000;box-sizing:border-box;"></div>
<span class="t" style="left:478.20px;top:369.25px;font-size:11px;line-height:14px;height:14px;color:#111;">Стоплосс</span>
<div style="left:459px;top:385px;width:20px;height:21px;background:#c8c8c8;border:1px solid #000;box-sizing:border-box;"></div>
<span class="t" style="left:466.84px;top:387.25px;font-size:13px;line-height:17px;height:17px;color:#111;">-</span>
<div style="left:478px;top:385px;width:49px;height:21px;border:1px solid #000;box-sizing:border-box;background:linear-gradient(100deg,#ececec,#e1e1e1);"></div>
<span class="t" style="left:490.36px;top:387.25px;font-size:13px;line-height:17px;height:17px;color:#111;transform:scaleX(0.9350);">200</span>
<div style="left:526px;top:385px;width:20px;height:21px;background:#c8c8c8;border:1px solid #000;box-sizing:border-box;"></div>
<span class="t" style="left:532.20px;top:387.25px;font-size:13px;line-height:17px;height:17px;color:#111;">+</span>
<div style="left:545px;top:366px;width:40px;height:40px;background:#c8c8c8;border:1px solid #000;box-sizing:border-box;"></div>
<span class="t" style="left:550.03px;top:379.25px;font-size:11px;line-height:14px;height:14px;color:#111;">Выкл.</span>
<div style="left:420px;top:411px;width:40px;height:40px;background:#22b322;border:1px solid #000;box-sizing:border-box;"></div>
<span class="t" style="left:429.19px;top:424.25px;font-size:11px;line-height:14px;height:14px;color:#111;">Вкл.</span>
<div style="left:459px;top:411px;width:87px;height:20px;background:#c8c8c8;border:1px solid #000;box-sizing:border-box;"></div>
<span class="t" style="left:471.39px;top:414.25px;font-size:11px;line-height:14px;height:14px;color:#111;">Тейкпрофит</span>
<div style="left:459px;top:430px;width:20px;height:21px;background:#c8c8c8;border:1px solid #000;box-sizing:border-box;"></div>
<span class="t" style="left:466.84px;top:432.25px;font-size:13px;line-height:17px;height:17px;color:#111;">-</span>
<div style="left:478px;top:430px;width:49px;height:21px;border:1px solid #000;box-sizing:border-box;background:linear-gradient(100deg,#ececec,#e1e1e1);"></div>
<span class="t" style="left:490.36px;top:432.25px;font-size:13px;line-height:17px;height:17px;color:#111;transform:scaleX(0.9350);">100</span>
<div style="left:526px;top:430px;width:20px;height:21px;background:#c8c8c8;border:1px solid #000;box-sizing:border-box;"></div>
<span class="t" style="left:532.20px;top:432.25px;font-size:13px;line-height:17px;height:17px;color:#111;">+</span>
<div style="left:545px;top:411px;width:40px;height:40px;background:#c8c8c8;border:1px solid #000;box-sizing:border-box;"></div>
<span class="t" style="left:550.03px;top:424.25px;font-size:11px;line-height:14px;height:14px;color:#111;">Выкл.</span>
<div style="left:420px;top:456px;width:40px;height:40px;background:#c8c8c8;border:1px solid #000;box-sizing:border-box;"></div>
<span class="t" style="left:429.19px;top:469.25px;font-size:11px;line-height:14px;height:14px;color:#111;">Вкл.</span>
<div style="left:459px;top:456px;width:87px;height:20px;background:#c8c8c8;border:1px solid #000;box-sizing:border-box;"></div>
<span class="t" style="left:478.62px;top:459.25px;font-size:11px;line-height:14px;height:14px;color:#111;">Трейлинг</span>
<div style="left:459px;top:475px;width:20px;height:21px;background:#c8c8c8;border:1px solid #000;box-sizing:border-box;"></div>
<span class="t" style="left:466.84px;top:477.25px;font-size:13px;line-height:17px;height:17px;color:#111;">-</span>
<div style="left:478px;top:475px;width:49px;height:21px;border:1px solid #000;box-sizing:border-box;background:linear-gradient(100deg,#ececec,#e1e1e1);"></div>
<span class="t" style="left:497.12px;top:477.25px;font-size:13px;line-height:17px;height:17px;color:#111;transform:scaleX(0.9350);">0</span>
<div style="left:526px;top:475px;width:20px;height:21px;background:#c8c8c8;border:1px solid #000;box-sizing:border-box;"></div>
<span class="t" style="left:532.20px;top:477.25px;font-size:13px;line-height:17px;height:17px;color:#111;">+</span>
<div style="left:545px;top:456px;width:40px;height:40px;background:#e85035;border:1px solid #000;box-sizing:border-box;"></div>
<span class="t" style="left:550.03px;top:469.25px;font-size:11px;line-height:14px;height:14px;color:#111;">Выкл.</span>
<div style="left:392px;top:610px;width:882px;height:18px;background:#f0f0f0;"></div>
<span class="t" style="left:404.30px;top:611.25px;font-size:12px;line-height:16px;height:16px;color:#6e6e6e;transform:scaleX(0.8730);">EURUSD,M1</span>
<span class="t" style="left:491.00px;top:611.25px;font-size:12px;line-height:16px;height:16px;color:#6e6e6e;transform:scaleX(0.9266);">EPM19,M1</span>
<span class="t" style="left:570.00px;top:611.25px;font-size:12px;line-height:16px;height:16px;color:#6e6e6e;transform:scaleX(0.9567);">FDXMM19,M1</span>
<span class="t" style="left:669.00px;top:611.25px;font-size:12px;line-height:16px;height:16px;color:#6e6e6e;transform:scaleX(0.8984);">GBPUSD,M1</span>
<div style="left:478px;top:612px;width:1px;height:14px;background:#7a7a7a;"></div>
<div style="left:559px;top:612px;width:1px;height:14px;background:#7a7a7a;"></div>
<div style="left:656px;top:612px;width:1px;height:14px;background:#7a7a7a;"></div>
<div style="left:746px;top:609px;width:97px;height:19px;background:#ffffff;border:1px solid #000;border-top:none;box-sizing:border-box;"></div>
<span class="t" style="left:758.00px;top:611.25px;font-size:12px;line-height:16px;height:16px;color:#000;transform:scaleX(0.9536);">MESM20,M10</span>
<span class="t" style="left:855.70px;top:611.25px;font-size:12px;line-height:16px;height:16px;color:#6e6e6e;transform:scaleX(0.9182);">EPM20,M1</span>
<svg style="left:1236px;top:614px;" width="30" height="10" viewBox="0 0 30 10"><path d="M5.4 2.2v5.8L1.7 5.1z M24 2.2v5.8l3.7-2.9z" fill="#a0a0a0"/></svg>
<div style="left:0px;top:630px;width:1275px;height:331px;background:#f0f0f0;"></div>
<div style="left:0px;top:647px;width:11px;height:310px;background:#d5e2f0;"></div>
<svg style="left:0px;top:634.5px;" width="8" height="8" viewBox="0 0 8 8"><path d="M0.4 1.2L5.4 6.2M5.4 1.2L0.4 6.2" stroke="#000" stroke-width="1.7"/></svg>
<span class="t" style="left:-30.5px;top:914.5px;width:72px;height:12px;font-size:11.5px;line-height:12px;color:#000;transform:rotate(-90deg);transform-origin:50% 50%;text-align:center;">Инструменты</span>
<div style="left:11px;top:633px;width:1262px;height:303px;background:#ffffff;border-top:1px solid #a8a8a8;border-left:1px solid #a8a8a8;box-sizing:border-box;"></div>
<div class="clip" style="left:12px;top:634px;width:1261px;height:301px;">
<div style="left:1000px;top:0px;width:142px;height:24px;background:#d9e9f7;"></div>
<div style="left:0px;top:43px;width:1243px;height:1px;background:#d4d4d4;"></div>
<div style="left:0px;top:44px;width:1243px;height:20px;background:#ebebeb;"></div>
<div style="left:0px;top:63px;width:1243px;height:1px;background:#d4d4d4;"></div>
<div style="left:0px;top:83px;width:1243px;height:1px;background:#d4d4d4;"></div>
<div style="left:0px;top:84px;width:1243px;height:20px;background:#ebebeb;"></div>
<div style="left:0px;top:103px;width:1243px;height:1px;background:#d4d4d4;"></div>
<div style="left:0px;top:123px;width:1243px;height:1px;background:#d4d4d4;"></div>
<div style="left:0px;top:124px;width:1243px;height:20px;background:#ebebeb;"></div>
<div style="left:0px;top:143px;width:1243px;height:1px;background:#d4d4d4;"></div>
<div style="left:0px;top:163px;width:1243px;height:1px;background:#d4d4d4;"></div>
<div style="left:0px;top:164px;width:1243px;height:20px;background:#ebebeb;"></div>
<div style="left:0px;top:183px;width:1243px;height:1px;background:#d4d4d4;"></div>
<div style="left:0px;top:203px;width:1243px;height:1px;background:#d4d4d4;"></div>
<div style="left:0px;top:204px;width:1243px;height:20px;background:#ebebeb;"></div>
<div style="left:0px;top:223px;width:1243px;height:1px;background:#d4d4d4;"></div>
<div style="left:0px;top:243px;width:1243px;height:1px;background:#d4d4d4;"></div>
<div style="left:0px;top:244px;width:1243px;height:20px;background:#ebebeb;"></div>
<div style="left:0px;top:263px;width:1243px;height:1px;background:#d4d4d4;"></div>
<div style="left:0px;top:283px;width:1243px;height:1px;background:#d4d4d4;"></div>
<div style="left:0px;top:284px;width:1243px;height:20px;background:#ebebeb;"></div>
<div style="left:0px;top:303px;width:1243px;height:1px;background:#d4d4d4;"></div>
<div style="left:131px;top:0px;width:1px;height:24px;background:#e4e4e4;"></div>
<div style="left:131px;top:24px;width:1px;height:277px;background:#d0d0d0;"></div>
<div style="left:222px;top:0px;width:1px;height:24px;background:#e4e4e4;"></div>
<div style="left:222px;top:24px;width:1px;height:277px;background:#d0d0d0;"></div>
<div style="left:293px;top:0px;width:1px;height:24px;background:#e4e4e4;"></div>
<div style="left:293px;top:24px;width:1px;height:277px;background:#d0d0d0;"></div>
<div style="left:354px;top:0px;width:1px;height:24px;background:#e4e4e4;"></div>
<div style="left:354px;top:24px;width:1px;height:277px;background:#d0d0d0;"></div>
<div style="left:455px;top:0px;width:1px;height:24px;background:#e4e4e4;"></div>
<div style="left:455px;top:24px;width:1px;height:277px;background:#d0d0d0;"></div>
<div style="left:556px;top:0px;width:1px;height:24px;background:#e4e4e4;"></div>
<div style="left:556px;top:24px;width:1px;height:277px;background:#d0d0d0;"></div>
<div style="left:657px;top:0px;width:1px;height:24px;background:#e4e4e4;"></div>
<div style="left:657px;top:24px;width:1px;height:277px;background:#d0d0d0;"></div>
<div style="left:758px;top:0px;width:1px;height:24px;background:#e4e4e4;"></div>
<div style="left:758px;top:24px;width:1px;height:277px;background:#d0d0d0;"></div>
<div style="left:898px;top:0px;width:1px;height:24px;background:#e4e4e4;"></div>
<div style="left:898px;top:24px;width:1px;height:277px;background:#d0d0d0;"></div>
<div style="left:999px;top:0px;width:1px;height:24px;background:#e4e4e4;"></div>
<div style="left:999px;top:24px;width:1px;height:277px;background:#d0d0d0;"></div>
<div style="left:1142px;top:0px;width:1px;height:24px;background:#e4e4e4;"></div>
<div style="left:1142px;top:24px;width:1px;height:277px;background:#d0d0d0;"></div>
<span class="t" style="left:6.30px;top:4.25px;font-size:12px;line-height:16px;height:16px;color:#000;transform:scaleX(0.9501);">Время</span>
<span class="t" style="left:149.40px;top:4.25px;font-size:12px;line-height:16px;height:16px;color:#000;transform:scaleX(0.9892);">Символ</span>
<svg style="left:207px;top:9px;" width="9" height="6" viewBox="0 0 9 6"><path d="M0 5h8.4L4.2 0.6z" fill="#303030"/></svg>
<span class="t" style="left:257.50px;top:4.25px;font-size:12px;line-height:16px;height:16px;color:#000;transform:scaleX(0.9697);">Тикет</span>
<span class="t" style="left:328.50px;top:4.25px;font-size:12px;line-height:16px;height:16px;color:#000;">Тип</span>
<span class="t" style="left:412.50px;top:4.25px;font-size:12px;line-height:16px;height:16px;color:#000;transform:scaleX(0.9707);">Объем</span>
<span class="t" style="left:524.00px;top:4.25px;font-size:12px;line-height:16px;height:16px;color:#000;transform:scaleX(0.9358);">Цена</span>
<span class="t" style="left:629.00px;top:4.25px;font-size:12px;line-height:16px;height:16px;color:#000;transform:scaleX(0.9319);">S / L</span>
<span class="t" style="left:728.00px;top:4.25px;font-size:12px;line-height:16px;height:16px;color:#000;transform:scaleX(0.9670);">T / P</span>
<span class="t" style="left:858.70px;top:4.25px;font-size:12px;line-height:16px;height:16px;color:#000;transform:scaleX(0.9501);">Время</span>
<span class="t" style="left:966.30px;top:4.25px;font-size:12px;line-height:16px;height:16px;color:#000;transform:scaleX(0.9358);">Цена</span>
<span class="t" style="left:1085.00px;top:4.25px;font-size:12px;line-height:16px;height:16px;color:#000;transform:scaleX(1.0245);">Прибыль</span>
<span class="t" style="left:1175.00px;top:4.25px;font-size:12px;line-height:16px;height:16px;color:#000;transform:scaleX(0.9943);">Изменение</span>
<svg style="left:2px;top:25px;" width="12" height="16" viewBox="0 0 12 16"><path d="M2.6 0.8h6.8a1.9 1.9 0 0 1 1.9 1.9v8.4l-3.8 4.1H2.6a1.9 1.9 0 0 1-1.9-1.9V2.7a1.9 1.9 0 0 1 1.9-1.9z" fill="#e4f1fd" stroke="#3b8cc4" stroke-width="1.5"/>
<path d="M2 9v4.4h4.6l3.8-3.8V9z" fill="#b4d6f6" opacity="0.7"/><path d="M7.4 15.4l4-4.3H7.4z" fill="#1c74b4"/><path d="M3.3 4.3h5.4M3.3 7.3h5.4" stroke="#86b8e4" stroke-width="1.3"/></svg>
<span class="t" style="left:21.40px;top:26.25px;font-size:12px;line-height:16px;height:16px;color:#000;transform:scaleX(0.8891);">2020.06.04 12:37:11</span>
<span class="t" style="left:174.50px;top:26.25px;font-size:12px;line-height:16px;height:16px;color:#000;transform:scaleX(0.9671);">mesm20</span>
<span class="t" style="left:242.05px;top:26.25px;font-size:12px;line-height:16px;height:16px;color:#000;transform:scaleX(0.8850);">57718061</span>
<span class="t" style="left:333.09px;top:26.25px;font-size:12px;line-height:16px;height:16px;color:#000;transform:scaleX(0.9100);">buy</span>
<span class="t" style="left:446.49px;top:26.25px;font-size:12px;line-height:16px;height:16px;color:#000;transform:scaleX(0.8850);">6</span>
<span class="t" style="left:515.01px;top:26.25px;font-size:12px;line-height:16px;height:16px;color:#000;transform:scaleX(0.8850);">3101.25</span>
<span class="t" style="left:615.61px;top:26.25px;font-size:12px;line-height:16px;height:16px;color:#000;transform:scaleX(0.8850);">3099.25</span>
<span class="t" style="left:797.10px;top:26.25px;font-size:12px;line-height:16px;height:16px;color:#000;transform:scaleX(0.8891);">2020.06.04 12:37:20</span>
<span class="t" style="left:957.61px;top:26.25px;font-size:12px;line-height:16px;height:16px;color:#000;transform:scaleX(0.8850);">3102.25</span>
<span class="t" style="left:1112.92px;top:26.25px;font-size:12px;line-height:16px;height:16px;color:#1c1ca4;transform:scaleX(0.8850);">30.00</span>
<span class="t" style="left:1206.44px;top:26.25px;font-size:12px;line-height:16px;height:16px;color:#1c1ca4;transform:scaleX(0.8850);">0.03 %</span>
<svg style="left:2px;top:45px;" width="12" height="16" viewBox="0 0 12 16"><path d="M2.6 0.8h6.8a1.9 1.9 0 0 1 1.9 1.9v8.4l-3.8 4.1H2.6a1.9 1.9 0 0 1-1.9-1.9V2.7a1.9 1.9 0 0 1 1.9-1.9z" fill="#fde9df" stroke="#d9603a" stroke-width="1.5"/>
<path d="M2 9v4.4h4.6l3.8-3.8V9z" fill="#f8cdb8" opacity="0.7"/><path d="M7.4 15.4l4-4.3H7.4z" fill="#c8481c"/><path d="M3.3 4.3h5.4M3.3 7.3h5.4" stroke="#f4b49c" stroke-width="1.3"/></svg>
<span class="t" style="left:21.40px;top:46.25px;font-size:12px;line-height:16px;height:16px;color:#000;transform:scaleX(0.8891);">2020.06.04 12:41:19</span>
<span class="t" style="left:174.50px;top:46.25px;font-size:12px;line-height:16px;height:16px;color:#000;transform:scaleX(0.9671);">mesm20</span>
<span class="t" style="left:242.05px;top:46.25px;font-size:12px;line-height:16px;height:16px;color:#000;transform:scaleX(0.8850);">57719230</span>
<span class="t" style="left:334.31px;top:46.25px;font-size:12px;line-height:16px;height:16px;color:#000;transform:scaleX(0.9100);">sell</span>
<span class="t" style="left:446.49px;top:46.25px;font-size:12px;line-height:16px;height:16px;color:#000;transform:scaleX(0.8850);">6</span>
<span class="t" style="left:515.01px;top:46.25px;font-size:12px;line-height:16px;height:16px;color:#000;transform:scaleX(0.8850);">3099.25</span>
<span class="t" style="left:615.61px;top:46.25px;font-size:12px;line-height:16px;height:16px;color:#000;transform:scaleX(0.8850);">3101.25</span>
<span class="t" style="left:797.10px;top:46.25px;font-size:12px;line-height:16px;height:16px;color:#000;transform:scaleX(0.8891);">2020.06.04 12:41:32</span>
<span class="t" style="left:957.61px;top:46.25px;font-size:12px;line-height:16px;height:16px;color:#000;transform:scaleX(0.8850);">3097.50</span>
<span class="t" style="left:1112.92px;top:46.25px;font-size:12px;line-height:16px;height:16px;color:#1c1ca4;transform:scaleX(0.8850);">52.50</span>
<span class="t" style="left:1206.44px;top:46.25px;font-size:12px;line-height:16px;height:16px;color:#1c1ca4;transform:scaleX(0.8850);">0.06 %</span>
<svg style="left:2px;top:65px;" width="12" height="16" viewBox="0 0 12 16"><path d="M2.6 0.8h6.8a1.9 1.9 0 0 1 1.9 1.9v8.4l-3.8 4.1H2.6a1.9 1.9 0 0 1-1.9-1.9V2.7a1.9 1.9 0 0 1 1.9-1.9z" fill="#fde9df" stroke="#d9603a" stroke-width="1.5"/>
<path d="M2 9v4.4h4.6l3.8-3.8V9z" fill="#f8cdb8" opacity="0.7"/><path d="M7.4 15.4l4-4.3H7.4z" fill="#c8481c"/><path d="M3.3 4.3h5.4M3.3 7.3h5.4" stroke="#f4b49c" stroke-width="1.3"/></svg>
<span class="t" style="left:21.40px;top:66.25px;font-size:12px;line-height:16px;height:16px;color:#000;transform:scaleX(0.8891);">2020.06.04 12:42:55</span>
<span class="t" style="left:174.50px;top:66.25px;font-size:12px;line-height:16px;height:16px;color:#000;transform:scaleX(0.9671);">mesm20</span>
<span class="t" style="left:242.05px;top:66.25px;font-size:12px;line-height:16px;height:16px;color:#000;transform:scaleX(0.8850);">57719952</span>
<span class="t" style="left:334.31px;top:66.25px;font-size:12px;line-height:16px;height:16px;color:#000;transform:scaleX(0.9100);">sell</span>
<span class="t" style="left:446.49px;top:66.25px;font-size:12px;line-height:16px;height:16px;color:#000;transform:scaleX(0.8850);">6</span>
<span class="t" style="left:515.01px;top:66.25px;font-size:12px;line-height:16px;height:16px;color:#000;transform:scaleX(0.8850);">3095.00</span>
<span class="t" style="left:615.61px;top:66.25px;font-size:12px;line-height:16px;height:16px;color:#000;transform:scaleX(0.8850);">3097.00</span>
<span class="t" style="left:797.10px;top:66.25px;font-size:12px;line-height:16px;height:16px;color:#000;transform:scaleX(0.8891);">2020.06.04 12:43:32</span>
<span class="t" style="left:957.61px;top:66.25px;font-size:12px;line-height:16px;height:16px;color:#000;transform:scaleX(0.8850);">3094.50</span>
<span class="t" style="left:1112.92px;top:66.25px;font-size:12px;line-height:16px;height:16px;color:#1c1ca4;transform:scaleX(0.8850);">15.00</span>
<span class="t" style="left:1206.44px;top:66.25px;font-size:12px;line-height:16px;height:16px;color:#1c1ca4;transform:scaleX(0.8850);">0.02 %</span>
<svg style="left:2px;top:85px;" width="12" height="16" viewBox="0 0 12 16"><path d="M2.6 0.8h6.8a1.9 1.9 0 0 1 1.9 1.9v8.4l-3.8 4.1H2.6a1.9 1.9 0 0 1-1.9-1.9V2.7a1.9 1.9 0 0 1 1.9-1.9z" fill="#e4f1fd" stroke="#3b8cc4" stroke-width="1.5"/>
<path d="M2 9v4.4h4.6l3.8-3.8V9z" fill="#b4d6f6" opacity="0.7"/><path d="M7.4 15.4l4-4.3H7.4z" fill="#1c74b4"/><path d="M3.3 4.3h5.4M3.3 7.3h5.4" stroke="#86b8e4" stroke-width="1.3"/></svg>
<span class="t" style="left:21.40px;top:86.25px;font-size:12px;line-height:16px;height:16px;color:#000;transform:scaleX(0.8891);">2020.06.04 12:55:08</span>
<span class="t" style="left:174.50px;top:86.25px;font-size:12px;line-height:16px;height:16px;color:#000;transform:scaleX(0.9671);">mesm20</span>
<span class="t" style="left:242.05px;top:86.25px;font-size:12px;line-height:16px;height:16px;color:#000;transform:scaleX(0.8850);">57722956</span>
<span class="t" style="left:333.09px;top:86.25px;font-size:12px;line-height:16px;height:16px;color:#000;transform:scaleX(0.9100);">buy</span>
<span class="t" style="left:446.49px;top:86.25px;font-size:12px;line-height:16px;height:16px;color:#000;transform:scaleX(0.8850);">6</span>
<span class="t" style="left:515.01px;top:86.25px;font-size:12px;line-height:16px;height:16px;color:#000;transform:scaleX(0.8850);">3100.00</span>
<span class="t" style="left:615.61px;top:86.25px;font-size:12px;line-height:16px;height:16px;color:#000;transform:scaleX(0.8850);">3098.00</span>
<span class="t" style="left:797.10px;top:86.25px;font-size:12px;line-height:16px;height:16px;color:#000;transform:scaleX(0.8891);">2020.06.04 12:57:34</span>
<span class="t" style="left:957.61px;top:86.25px;font-size:12px;line-height:16px;height:16px;color:#000;transform:scaleX(0.8850);">3101.00</span>
<span class="t" style="left:1112.92px;top:86.25px;font-size:12px;line-height:16px;height:16px;color:#1c1ca4;transform:scaleX(0.8850);">30.00</span>
<span class="t" style="left:1206.44px;top:86.25px;font-size:12px;line-height:16px;height:16px;color:#1c1ca4;transform:scaleX(0.8850);">0.03 %</span>
<svg style="left:2px;top:105px;" width="12" height="16" viewBox="0 0 12 16"><path d="M2.6 0.8h6.8a1.9 1.9 0 0 1 1.9 1.9v8.4l-3.8 4.1H2.6a1.9 1.9 0 0 1-1.9-1.9V2.7a1.9 1.9 0 0 1 1.9-1.9z" fill="#e4f1fd" stroke="#3b8cc4" stroke-width="1.5"/>
<path d="M2 9v4.4h4.6l3.8-3.8V9z" fill="#b4d6f6" opacity="0.7"/><path d="M7.4 15.4l4-4.3H7.4z" fill="#1c74b4"/><path d="M3.3 4.3h5.4M3.3 7.3h5.4" stroke="#86b8e4" stroke-width="1.3"/></svg>
<span class="t" style="left:21.40px;top:106.25px;font-size:12px;line-height:16px;height:16px;color:#000;transform:scaleX(0.8891);">2020.06.05 06:30:12</span>
<span class="t" style="left:174.50px;top:106.25px;font-size:12px;line-height:16px;height:16px;color:#000;transform:scaleX(0.9671);">mesm20</span>
<span class="t" style="left:242.05px;top:106.25px;font-size:12px;line-height:16px;height:16px;color:#000;transform:scaleX(0.8850);">57901282</span>
<span class="t" style="left:333.09px;top:106.25px;font-size:12px;line-height:16px;height:16px;color:#000;transform:scaleX(0.9100);">buy</span>
<span class="t" style="left:446.49px;top:106.25px;font-size:12px;line-height:16px;height:16px;color:#000;transform:scaleX(0.8850);">4</span>
<span class="t" style="left:515.01px;top:106.25px;font-size:12px;line-height:16px;height:16px;color:#000;transform:scaleX(0.8850);">3135.50</span>
<span class="t" style="left:615.61px;top:106.25px;font-size:12px;line-height:16px;height:16px;color:#000;transform:scaleX(0.8850);">3133.50</span>
<span class="t" style="left:797.10px;top:106.25px;font-size:12px;line-height:16px;height:16px;color:#000;transform:scaleX(0.8891);">2020.06.05 06:44:34</span>
<span class="t" style="left:957.61px;top:106.25px;font-size:12px;line-height:16px;height:16px;color:#000;transform:scaleX(0.8850);">3135.25</span>
<span class="t" style="left:1115.29px;top:106.25px;font-size:12px;line-height:16px;height:16px;color:#d02020;transform:scaleX(0.8850);">-5.00</span>
<span class="t" style="left:1202.90px;top:106.25px;font-size:12px;line-height:16px;height:16px;color:#d02020;transform:scaleX(0.8850);">-0.01 %</span>
<svg style="left:2px;top:125px;" width="12" height="16" viewBox="0 0 12 16"><path d="M2.6 0.8h6.8a1.9 1.9 0 0 1 1.9 1.9v8.4l-3.8 4.1H2.6a1.9 1.9 0 0 1-1.9-1.9V2.7a1.9 1.9 0 0 1 1.9-1.9z" fill="#fde9df" stroke="#d9603a" stroke-width="1.5"/>
<path d="M2 9v4.4h4.6l3.8-3.8V9z" fill="#f8cdb8" opacity="0.7"/><path d="M7.4 15.4l4-4.3H7.4z" fill="#c8481c"/><path d="M3.3 4.3h5.4M3.3 7.3h5.4" stroke="#f4b49c" stroke-width="1.3"/></svg>
<span class="t" style="left:21.40px;top:126.25px;font-size:12px;line-height:16px;height:16px;color:#000;transform:scaleX(0.8891);">2020.06.05 07:00:31</span>
<span class="t" style="left:174.50px;top:126.25px;font-size:12px;line-height:16px;height:16px;color:#000;transform:scaleX(0.9671);">mesm20</span>
<span class="t" style="left:242.05px;top:126.25px;font-size:12px;line-height:16px;height:16px;color:#000;transform:scaleX(0.8850);">57905155</span>
<span class="t" style="left:334.31px;top:126.25px;font-size:12px;line-height:16px;height:16px;color:#000;transform:scaleX(0.9100);">sell</span>
<span class="t" style="left:446.49px;top:126.25px;font-size:12px;line-height:16px;height:16px;color:#000;transform:scaleX(0.8850);">6</span>
<span class="t" style="left:515.01px;top:126.25px;font-size:12px;line-height:16px;height:16px;color:#000;transform:scaleX(0.8850);">3133.50</span>
<span class="t" style="left:615.61px;top:126.25px;font-size:12px;line-height:16px;height:16px;color:#000;transform:scaleX(0.8850);">3135.50</span>
<span class="t" style="left:797.10px;top:126.25px;font-size:12px;line-height:16px;height:16px;color:#000;transform:scaleX(0.8891);">2020.06.05 07:02:28</span>
<span class="t" style="left:957.61px;top:126.25px;font-size:12px;line-height:16px;height:16px;color:#000;transform:scaleX(0.8850);">3132.75</span>
<span class="t" style="left:1112.92px;top:126.25px;font-size:12px;line-height:16px;height:16px;color:#1c1ca4;transform:scaleX(0.8850);">22.50</span>
<span class="t" style="left:1206.44px;top:126.25px;font-size:12px;line-height:16px;height:16px;color:#1c1ca4;transform:scaleX(0.8850);">0.02 %</span>
<svg style="left:2px;top:145px;" width="12" height="16" viewBox="0 0 12 16"><path d="M2.6 0.8h6.8a1.9 1.9 0 0 1 1.9 1.9v8.4l-3.8 4.1H2.6a1.9 1.9 0 0 1-1.9-1.9V2.7a1.9 1.9 0 0 1 1.9-1.9z" fill="#e4f1fd" stroke="#3b8cc4" stroke-width="1.5"/>
<path d="M2 9v4.4h4.6l3.8-3.8V9z" fill="#b4d6f6" opacity="0.7"/><path d="M7.4 15.4l4-4.3H7.4z" fill="#1c74b4"/><path d="M3.3 4.3h5.4M3.3 7.3h5.4" stroke="#86b8e4" stroke-width="1.3"/></svg>
<span class="t" style="left:21.40px;top:146.25px;font-size:12px;line-height:16px;height:16px;color:#000;transform:scaleX(0.8891);">2020.06.05 07:10:56</span>
<span class="t" style="left:174.50px;top:146.25px;font-size:12px;line-height:16px;height:16px;color:#000;transform:scaleX(0.9671);">mesm20</span>
<span class="t" style="left:242.05px;top:146.25px;font-size:12px;line-height:16px;height:16px;color:#000;transform:scaleX(0.8850);">57907238</span>
<span class="t" style="left:333.09px;top:146.25px;font-size:12px;line-height:16px;height:16px;color:#000;transform:scaleX(0.9100);">buy</span>
<span class="t" style="left:446.49px;top:146.25px;font-size:12px;line-height:16px;height:16px;color:#000;transform:scaleX(0.8850);">6</span>
<span class="t" style="left:515.01px;top:146.25px;font-size:12px;line-height:16px;height:16px;color:#000;transform:scaleX(0.8850);">3136.25</span>
<span class="t" style="left:615.61px;top:146.25px;font-size:12px;line-height:16px;height:16px;color:#000;transform:scaleX(0.8850);">3134.25</span>
<span class="t" style="left:797.10px;top:146.25px;font-size:12px;line-height:16px;height:16px;color:#000;transform:scaleX(0.8891);">2020.06.05 07:11:07</span>
<span class="t" style="left:957.61px;top:146.25px;font-size:12px;line-height:16px;height:16px;color:#000;transform:scaleX(0.8850);">3137.00</span>
<span class="t" style="left:1112.92px;top:146.25px;font-size:12px;line-height:16px;height:16px;color:#1c1ca4;transform:scaleX(0.8850);">22.50</span>
<span class="t" style="left:1206.44px;top:146.25px;font-size:12px;line-height:16px;height:16px;color:#1c1ca4;transform:scaleX(0.8850);">0.02 %</span>
<svg style="left:2px;top:165px;" width="12" height="16" viewBox="0 0 12 16"><path d="M2.6 0.8h6.8a1.9 1.9 0 0 1 1.9 1.9v8.4l-3.8 4.1H2.6a1.9 1.9 0 0 1-1.9-1.9V2.7a1.9 1.9 0 0 1 1.9-1.9z" fill="#e4f1fd" stroke="#3b8cc4" stroke-width="1.5"/>
<path d="M2 9v4.4h4.6l3.8-3.8V9z" fill="#b4d6f6" opacity="0.7"/><path d="M7.4 15.4l4-4.3H7.4z" fill="#1c74b4"/><path d="M3.3 4.3h5.4M3.3 7.3h5.4" stroke="#86b8e4" stroke-width="1.3"/></svg>
<span class="t" style="left:21.40px;top:166.25px;font-size:12px;line-height:16px;height:16px;color:#000;transform:scaleX(0.8891);">2020.06.05 07:12:20</span>
<span class="t" style="left:174.50px;top:166.25px;font-size:12px;line-height:16px;height:16px;color:#000;transform:scaleX(0.9671);">mesm20</span>
<span class="t" style="left:242.05px;top:166.25px;font-size:12px;line-height:16px;height:16px;color:#000;transform:scaleX(0.8850);">57907521</span>
<span class="t" style="left:333.09px;top:166.25px;font-size:12px;line-height:16px;height:16px;color:#000;transform:scaleX(0.9100);">buy</span>
<span class="t" style="left:446.49px;top:166.25px;font-size:12px;line-height:16px;height:16px;color:#000;transform:scaleX(0.8850);">6</span>
<span class="t" style="left:515.01px;top:166.25px;font-size:12px;line-height:16px;height:16px;color:#000;transform:scaleX(0.8850);">3137.50</span>
<span class="t" style="left:615.61px;top:166.25px;font-size:12px;line-height:16px;height:16px;color:#000;transform:scaleX(0.8850);">3135.50</span>
<span class="t" style="left:797.10px;top:166.25px;font-size:12px;line-height:16px;height:16px;color:#000;transform:scaleX(0.8891);">2020.06.05 07:12:36</span>
<span class="t" style="left:957.61px;top:166.25px;font-size:12px;line-height:16px;height:16px;color:#000;transform:scaleX(0.8850);">3138.25</span>
<span class="t" style="left:1112.92px;top:166.25px;font-size:12px;line-height:16px;height:16px;color:#1c1ca4;transform:scaleX(0.8850);">22.50</span>
<span class="t" style="left:1206.44px;top:166.25px;font-size:12px;line-height:16px;height:16px;color:#1c1ca4;transform:scaleX(0.8850);">0.02 %</span>
<svg style="left:2px;top:185px;" width="12" height="16" viewBox="0 0 12 16"><path d="M2.6 0.8h6.8a1.9 1.9 0 0 1 1.9 1.9v8.4l-3.8 4.1H2.6a1.9 1.9 0 0 1-1.9-1.9V2.7a1.9 1.9 0 0 1 1.9-1.9z" fill="#e4f1fd" stroke="#3b8cc4" stroke-width="1.5"/>
<path d="M2 9v4.4h4.6l3.8-3.8V9z" fill="#b4d6f6" opacity="0.7"/><path d="M7.4 15.4l4-4.3H7.4z" fill="#1c74b4"/><path d="M3.3 4.3h5.4M3.3 7.3h5.4" stroke="#86b8e4" stroke-width="1.3"/></svg>
<span class="t" style="left:21.40px;top:186.25px;font-size:12px;line-height:16px;height:16px;color:#000;transform:scaleX(0.8891);">2020.06.05 07:22:49</span>
<span class="t" style="left:174.50px;top:186.25px;font-size:12px;line-height:16px;height:16px;color:#000;transform:scaleX(0.9671);">mesm20</span>
<span class="t" style="left:242.05px;top:186.25px;font-size:12px;line-height:16px;height:16px;color:#000;transform:scaleX(0.8850);">57909432</span>
<span class="t" style="left:333.09px;top:186.25px;font-size:12px;line-height:16px;height:16px;color:#000;transform:scaleX(0.9100);">buy</span>
<span class="t" style="left:446.49px;top:186.25px;font-size:12px;line-height:16px;height:16px;color:#000;transform:scaleX(0.8850);">6</span>
<span class="t" style="left:515.01px;top:186.25px;font-size:12px;line-height:16px;height:16px;color:#000;transform:scaleX(0.8850);">3141.00</span>
<span class="t" style="left:615.61px;top:186.25px;font-size:12px;line-height:16px;height:16px;color:#000;transform:scaleX(0.8850);">3139.00</span>
<span class="t" style="left:797.10px;top:186.25px;font-size:12px;line-height:16px;height:16px;color:#000;transform:scaleX(0.8891);">2020.06.05 07:23:34</span>
<span class="t" style="left:957.61px;top:186.25px;font-size:12px;line-height:16px;height:16px;color:#000;transform:scaleX(0.8850);">3141.75</span>
<span class="t" style="left:1112.92px;top:186.25px;font-size:12px;line-height:16px;height:16px;color:#1c1ca4;transform:scaleX(0.8850);">22.50</span>
<span class="t" style="left:1206.44px;top:186.25px;font-size:12px;line-height:16px;height:16px;color:#1c1ca4;transform:scaleX(0.8850);">0.02 %</span>
<svg style="left:2px;top:205px;" width="12" height="16" viewBox="0 0 12 16"><path d="M2.6 0.8h6.8a1.9 1.9 0 0 1 1.9 1.9v8.4l-3.8 4.1H2.6a1.9 1.9 0 0 1-1.9-1.9V2.7a1.9 1.9 0 0 1 1.9-1.9z" fill="#fde9df" stroke="#d9603a" stroke-width="1.5"/>
<path d="M2 9v4.4h4.6l3.8-3.8V9z" fill="#f8cdb8" opacity="0.7"/><path d="M7.4 15.4l4-4.3H7.4z" fill="#c8481c"/><path d="M3.3 4.3h5.4M3.3 7.3h5.4" stroke="#f4b49c" stroke-width="1.3"/></svg>
<span class="t" style="left:21.40px;top:206.25px;font-size:12px;line-height:16px;height:16px;color:#000;transform:scaleX(0.8891);">2020.06.05 07:30:31</span>
<span class="t" style="left:174.50px;top:206.25px;font-size:12px;line-height:16px;height:16px;color:#000;transform:scaleX(0.9671);">mesm20</span>
<span class="t" style="left:242.05px;top:206.25px;font-size:12px;line-height:16px;height:16px;color:#000;transform:scaleX(0.8850);">57910856</span>
<span class="t" style="left:334.31px;top:206.25px;font-size:12px;line-height:16px;height:16px;color:#000;transform:scaleX(0.9100);">sell</span>
<span class="t" style="left:446.49px;top:206.25px;font-size:12px;line-height:16px;height:16px;color:#000;transform:scaleX(0.8850);">6</span>
<span class="t" style="left:515.01px;top:206.25px;font-size:12px;line-height:16px;height:16px;color:#000;transform:scaleX(0.8850);">3139.75</span>
<span class="t" style="left:615.61px;top:206.25px;font-size:12px;line-height:16px;height:16px;color:#000;transform:scaleX(0.8850);">3141.75</span>
<span class="t" style="left:797.10px;top:206.25px;font-size:12px;line-height:16px;height:16px;color:#000;transform:scaleX(0.8891);">2020.06.05 07:32:10</span>
<span class="t" style="left:957.61px;top:206.25px;font-size:12px;line-height:16px;height:16px;color:#000;transform:scaleX(0.8850);">3141.00</span>
<span class="t" style="left:1109.39px;top:206.25px;font-size:12px;line-height:16px;height:16px;color:#d02020;transform:scaleX(0.8850);">-37.50</span>
<span class="t" style="left:1202.90px;top:206.25px;font-size:12px;line-height:16px;height:16px;color:#d02020;transform:scaleX(0.8850);">-0.04 %</span>
<svg style="left:2px;top:225px;" width="12" height="16" viewBox="0 0 12 16"><path d="M2.6 0.8h6.8a1.9 1.9 0 0 1 1.9 1.9v8.4l-3.8 4.1H2.6a1.9 1.9 0 0 1-1.9-1.9V2.7a1.9 1.9 0 0 1 1.9-1.9z" fill="#e4f1fd" stroke="#3b8cc4" stroke-width="1.5"/>
<path d="M2 9v4.4h4.6l3.8-3.8V9z" fill="#b4d6f6" opacity="0.7"/><path d="M7.4 15.4l4-4.3H7.4z" fill="#1c74b4"/><path d="M3.3 4.3h5.4M3.3 7.3h5.4" stroke="#86b8e4" stroke-width="1.3"/></svg>
<span class="t" style="left:21.40px;top:226.25px;font-size:12px;line-height:16px;height:16px;color:#000;transform:scaleX(0.8891);">2020.06.05 07:32:10</span>
<span class="t" style="left:174.50px;top:226.25px;font-size:12px;line-height:16px;height:16px;color:#000;transform:scaleX(0.9671);">mesm20</span>
<span class="t" style="left:242.05px;top:226.25px;font-size:12px;line-height:16px;height:16px;color:#000;transform:scaleX(0.8850);">57911153</span>
<span class="t" style="left:333.09px;top:226.25px;font-size:12px;line-height:16px;height:16px;color:#000;transform:scaleX(0.9100);">buy</span>
<span class="t" style="left:446.49px;top:226.25px;font-size:12px;line-height:16px;height:16px;color:#000;transform:scaleX(0.8850);">6</span>
<span class="t" style="left:515.01px;top:226.25px;font-size:12px;line-height:16px;height:16px;color:#000;transform:scaleX(0.8850);">3141.00</span>
<span class="t" style="left:615.61px;top:226.25px;font-size:12px;line-height:16px;height:16px;color:#000;transform:scaleX(0.8850);">3139.25</span>
<span class="t" style="left:797.10px;top:226.25px;font-size:12px;line-height:16px;height:16px;color:#000;transform:scaleX(0.8891);">2020.06.05 07:36:18</span>
<span class="t" style="left:957.61px;top:226.25px;font-size:12px;line-height:16px;height:16px;color:#000;transform:scaleX(0.8850);">3142.00</span>
<span class="t" style="left:1112.92px;top:226.25px;font-size:12px;line-height:16px;height:16px;color:#1c1ca4;transform:scaleX(0.8850);">30.00</span>
<span class="t" style="left:1206.44px;top:226.25px;font-size:12px;line-height:16px;height:16px;color:#1c1ca4;transform:scaleX(0.8850);">0.03 %</span>
<svg style="left:2px;top:245px;" width="12" height="16" viewBox="0 0 12 16"><path d="M2.6 0.8h6.8a1.9 1.9 0 0 1 1.9 1.9v8.4l-3.8 4.1H2.6a1.9 1.9 0 0 1-1.9-1.9V2.7a1.9 1.9 0 0 1 1.9-1.9z" fill="#e4f1fd" stroke="#3b8cc4" stroke-width="1.5"/>
<path d="M2 9v4.4h4.6l3.8-3.8V9z" fill="#b4d6f6" opacity="0.7"/><path d="M7.4 15.4l4-4.3H7.4z" fill="#1c74b4"/><path d="M3.3 4.3h5.4M3.3 7.3h5.4" stroke="#86b8e4" stroke-width="1.3"/></svg>
<span class="t" style="left:21.40px;top:246.25px;font-size:12px;line-height:16px;height:16px;color:#000;transform:scaleX(0.8891);">2020.06.05 07:43:37</span>
<span class="t" style="left:174.50px;top:246.25px;font-size:12px;line-height:16px;height:16px;color:#000;transform:scaleX(0.9671);">mesm20</span>
<span class="t" style="left:242.05px;top:246.25px;font-size:12px;line-height:16px;height:16px;color:#000;transform:scaleX(0.8850);">57913033</span>
<span class="t" style="left:333.09px;top:246.25px;font-size:12px;line-height:16px;height:16px;color:#000;transform:scaleX(0.9100);">buy</span>
<span class="t" style="left:446.49px;top:246.25px;font-size:12px;line-height:16px;height:16px;color:#000;transform:scaleX(0.8850);">6</span>
<span class="t" style="left:515.01px;top:246.25px;font-size:12px;line-height:16px;height:16px;color:#000;transform:scaleX(0.8850);">3141.50</span>
<span class="t" style="left:615.61px;top:246.25px;font-size:12px;line-height:16px;height:16px;color:#000;transform:scaleX(0.8850);">3139.50</span>
<span class="t" style="left:797.10px;top:246.25px;font-size:12px;line-height:16px;height:16px;color:#000;transform:scaleX(0.8891);">2020.06.05 07:43:47</span>
<span class="t" style="left:957.61px;top:246.25px;font-size:12px;line-height:16px;height:16px;color:#000;transform:scaleX(0.8850);">3143.25</span>
<span class="t" style="left:1112.92px;top:246.25px;font-size:12px;line-height:16px;height:16px;color:#1c1ca4;transform:scaleX(0.8850);">52.50</span>
<span class="t" style="left:1206.44px;top:246.25px;font-size:12px;line-height:16px;height:16px;color:#1c1ca4;transform:scaleX(0.8850);">0.06 %</span>
<svg style="left:2px;top:265px;" width="12" height="16" viewBox="0 0 12 16"><path d="M2.6 0.8h6.8a1.9 1.9 0 0 1 1.9 1.9v8.4l-3.8 4.1H2.6a1.9 1.9 0 0 1-1.9-1.9V2.7a1.9 1.9 0 0 1 1.9-1.9z" fill="#fde9df" stroke="#d9603a" stroke-width="1.5"/>
<path d="M2 9v4.4h4.6l3.8-3.8V9z" fill="#f8cdb8" opacity="0.7"/><path d="M7.4 15.4l4-4.3H7.4z" fill="#c8481c"/><path d="M3.3 4.3h5.4M3.3 7.3h5.4" stroke="#f4b49c" stroke-width="1.3"/></svg>
<span class="t" style="left:21.40px;top:266.25px;font-size:12px;line-height:16px;height:16px;color:#000;transform:scaleX(0.8891);">2020.06.05 07:50:38</span>
<span class="t" style="left:174.50px;top:266.25px;font-size:12px;line-height:16px;height:16px;color:#000;transform:scaleX(0.9671);">mesm20</span>
<span class="t" style="left:242.05px;top:266.25px;font-size:12px;line-height:16px;height:16px;color:#000;transform:scaleX(0.8850);">57914345</span>
<span class="t" style="left:334.31px;top:266.25px;font-size:12px;line-height:16px;height:16px;color:#000;transform:scaleX(0.9100);">sell</span>
<span class="t" style="left:446.49px;top:266.25px;font-size:12px;line-height:16px;height:16px;color:#000;transform:scaleX(0.8850);">6</span>
<span class="t" style="left:515.01px;top:266.25px;font-size:12px;line-height:16px;height:16px;color:#000;transform:scaleX(0.8850);">3142.25</span>
<span class="t" style="left:615.61px;top:266.25px;font-size:12px;line-height:16px;height:16px;color:#000;transform:scaleX(0.8850);">3144.25</span>
<span class="t" style="left:797.10px;top:266.25px;font-size:12px;line-height:16px;height:16px;color:#000;transform:scaleX(0.8891);">2020.06.05 07:51:26</span>
<span class="t" style="left:957.61px;top:266.25px;font-size:12px;line-height:16px;height:16px;color:#000;transform:scaleX(0.8850);">3141.50</span>
<span class="t" style="left:1112.92px;top:266.25px;font-size:12px;line-height:16px;height:16px;color:#1c1ca4;transform:scaleX(0.8850);">22.50</span>
<span class="t" style="left:1206.44px;top:266.25px;font-size:12px;line-height:16px;height:16px;color:#1c1ca4;transform:scaleX(0.8850);">0.02 %</span>
<svg style="left:2px;top:285px;" width="12" height="16" viewBox="0 0 12 16"><path d="M2.6 0.8h6.8a1.9 1.9 0 0 1 1.9 1.9v8.4l-3.8 4.1H2.6a1.9 1.9 0 0 1-1.9-1.9V2.7a1.9 1.9 0 0 1 1.9-1.9z" fill="#e4f1fd" stroke="#3b8cc4" stroke-width="1.5"/>
<path d="M2 9v4.4h4.6l3.8-3.8V9z" fill="#b4d6f6" opacity="0.7"/><path d="M7.4 15.4l4-4.3H7.4z" fill="#1c74b4"/><path d="M3.3 4.3h5.4M3.3 7.3h5.4" stroke="#86b8e4" stroke-width="1.3"/></svg>
<span class="t" style="left:21.40px;top:286.25px;font-size:12px;line-height:16px;height:16px;color:#000;transform:scaleX(0.8891);">2020.06.05 07:55:42</span>
<span class="t" style="left:174.50px;top:286.25px;font-size:12px;line-height:16px;height:16px;color:#000;transform:scaleX(0.9671);">mesm20</span>
<span class="t" style="left:242.05px;top:286.25px;font-size:12px;line-height:16px;height:16px;color:#000;transform:scaleX(0.8850);">57915074</span>
<span class="t" style="left:333.09px;top:286.25px;font-size:12px;line-height:16px;height:16px;color:#000;transform:scaleX(0.9100);">buy</span>
<span class="t" style="left:446.49px;top:286.25px;font-size:12px;line-height:16px;height:16px;color:#000;transform:scaleX(0.8850);">6</span>
<span class="t" style="left:515.01px;top:286.25px;font-size:12px;line-height:16px;height:16px;color:#000;transform:scaleX(0.8850);">3143.75</span>
<span class="t" style="left:615.61px;top:286.25px;font-size:12px;line-height:16px;height:16px;color:#000;transform:scaleX(0.8850);">3141.75</span>
<span class="t" style="left:797.10px;top:286.25px;font-size:12px;line-height:16px;height:16px;color:#000;transform:scaleX(0.8891);">2020.06.05 07:56:13</span>
<span class="t" style="left:957.61px;top:286.25px;font-size:12px;line-height:16px;height:16px;color:#000;transform:scaleX(0.8850);">3144.50</span>
<span class="t" style="left:1112.92px;top:286.25px;font-size:12px;line-height:16px;height:16px;color:#1c1ca4;transform:scaleX(0.8850);">22.50</span>
<span class="t" style="left:1206.44px;top:286.25px;font-size:12px;line-height:16px;height:16px;color:#1c1ca4;transform:scaleX(0.8850);">0.02 %</span>
<span class="t" style="left:909.20px;top:241.25px;font-size:19px;line-height:23px;height:23px;color:rgba(125,125,125,0.47);transform:scaleX(1.0462);">Активация Windows</span>
<span class="t" style="left:909.20px;top:266.25px;font-size:14px;line-height:18px;height:18px;color:rgba(125,125,125,0.47);transform:scaleX(1.0668);">Чтобы активировать Windows, перейдите в</span>
<span class="t" style="left:909.20px;top:286.25px;font-size:14px;line-height:18px;height:18px;color:rgba(125,125,125,0.47);transform:scaleX(1.0581);">раздел &quot;Параметры&quot;.</span>
</div>
<div style="left:1255px;top:634px;width:18px;height:301px;background:#f0f0f0;"></div>
<div style="left:1257px;top:889px;width:14px;height:17px;background:#cdcdcd;"></div>
<svg style="left:1259px;top:639px;" width="10" height="8" viewBox="0 0 10 8"><path d="M1.3 6.4L4.8 2.6l3.5 3.8" stroke="#505050" stroke-width="2" fill="none"/></svg>
<svg style="left:1259px;top:923px;" width="10" height="8" viewBox="0 0 10 8"><path d="M1.3 1.8l3.5 3.8 3.5-3.8" stroke="#505050" stroke-width="2" fill="none"/></svg>
<div style="left:11px;top:935px;width:1262px;height:1px;background:#000;"></div>
<div style="left:147px;top:935px;width:68px;height:20px;background:#ffffff;border:1px solid #000;border-top:none;box-sizing:border-box;"></div>
<span class="t" style="left:24.30px;top:937.25px;font-size:12px;line-height:16px;height:16px;color:#6e6e6e;transform:scaleX(0.9883);">Торговля</span>
<span class="t" style="left:96.60px;top:937.25px;font-size:12px;line-height:16px;height:16px;color:#6e6e6e;transform:scaleX(0.9937);">Активы</span>
<span class="t" style="left:157.40px;top:937.25px;font-size:12px;line-height:16px;height:16px;color:#000;transform:scaleX(0.9835);">История</span>
<span class="t" style="left:224.60px;top:937.25px;font-size:12px;line-height:16px;height:16px;color:#6e6e6e;transform:scaleX(0.9874);">Новости</span>
<span class="t" style="left:291.20px;top:937.25px;font-size:12px;line-height:16px;height:16px;color:#6e6e6e;transform:scaleX(0.9845);">Почта</span>
<span class="t" style="left:352.20px;top:937.25px;font-size:12px;line-height:16px;height:16px;color:#6e6e6e;transform:scaleX(0.9493);">Календарь</span>
<span class="t" style="left:430.00px;top:937.25px;font-size:12px;line-height:16px;height:16px;color:#6e6e6e;transform:scaleX(1.0161);">Компания</span>
<span class="t" style="left:506.40px;top:937.25px;font-size:12px;line-height:16px;height:16px;color:#6e6e6e;transform:scaleX(0.9910);">Маркет</span>
<span class="t" style="left:567.40px;top:937.25px;font-size:12px;line-height:16px;height:16px;color:#6e6e6e;transform:scaleX(0.9747);">Алерты</span>
<span class="t" style="left:629.60px;top:937.25px;font-size:12px;line-height:16px;height:16px;color:#6e6e6e;transform:scaleX(0.9923);">Сигналы</span>
<span class="t" style="left:698.50px;top:937.25px;font-size:12px;line-height:16px;height:16px;color:#6e6e6e;transform:scaleX(0.9265);">Статьи</span>
<span class="t" style="left:755.30px;top:937.25px;font-size:12px;line-height:16px;height:16px;color:#6e6e6e;transform:scaleX(0.9784);">Библиотека</span>
<span class="t" style="left:840.60px;top:937.25px;font-size:12px;line-height:16px;height:16px;color:#6e6e6e;transform:scaleX(0.8287);">VPS</span>
<span class="t" style="left:880.60px;top:937.25px;font-size:12px;line-height:16px;height:16px;color:#6e6e6e;transform:scaleX(0.9732);">Эксперты</span>
<span class="t" style="left:953.00px;top:937.25px;font-size:12px;line-height:16px;height:16px;color:#6e6e6e;transform:scaleX(0.9873);">Журнал</span>
<span class="t" style="left:327.00px;top:943.25px;font-size:9px;line-height:12px;height:12px;color:#d82020;font-weight:bold;">7</span>
<div style="left:86px;top:938px;width:1px;height:14px;background:#7a7a7a;"></div>
<div style="left:281px;top:938px;width:1px;height:14px;background:#7a7a7a;"></div>
<div style="left:342px;top:938px;width:1px;height:14px;background:#7a7a7a;"></div>
<div style="left:421px;top:938px;width:1px;height:14px;background:#7a7a7a;"></div>
<div style="left:496px;top:938px;width:1px;height:14px;background:#7a7a7a;"></div>
<div style="left:557px;top:938px;width:1px;height:14px;background:#7a7a7a;"></div>
<div style="left:619px;top:938px;width:1px;height:14px;background:#7a7a7a;"></div>
<div style="left:688px;top:938px;width:1px;height:14px;background:#7a7a7a;"></div>
<div style="left:745px;top:938px;width:1px;height:14px;background:#7a7a7a;"></div>
<div style="left:830px;top:938px;width:1px;height:14px;background:#7a7a7a;"></div>
<div style="left:870px;top:938px;width:1px;height:14px;background:#7a7a7a;"></div>
<div style="left:943px;top:938px;width:1px;height:14px;background:#7a7a7a;"></div>
<span class="t" style="left:1163.80px;top:938.25px;font-size:12px;line-height:16px;height:16px;color:#000;transform:scaleX(0.9589);">Тестер стратегий</span>
<div style="left:0px;top:957px;width:1275px;height:1px;background:#fcfcfc;"></div>
<div style="left:0px;top:958px;width:1275px;height:1px;background:#fcfcfc;"></div>
<div style="left:0px;top:960px;width:1275px;height:1px;background:#a6a6a6;"></div>
<div style="left:0px;top:961px;width:1275px;height:22px;background:#f0f0f0;"></div>
<span class="t" style="left:-1.50px;top:966.25px;font-size:12px;line-height:16px;height:16px;color:#000;transform:scaleX(0.9707);">Для вызова справки нажмите F1</span>
<span class="t" style="left:589.20px;top:966.25px;font-size:12px;line-height:16px;height:16px;color:#000;transform:scaleX(0.9863);">Default</span>
<div style="left:583px;top:964px;width:1px;height:19px;background:#a8a8a8;"></div>
<div style="left:711px;top:964px;width:1px;height:19px;background:#a8a8a8;"></div>
<div style="left:809px;top:964px;width:1px;height:19px;background:#a8a8a8;"></div>
<div style="left:880px;top:964px;width:1px;height:19px;background:#a8a8a8;"></div>
<div style="left:951px;top:964px;width:1px;height:19px;background:#a8a8a8;"></div>
<div style="left:1019px;top:964px;width:1px;height:19px;background:#a8a8a8;"></div>
<div style="left:1089px;top:964px;width:1px;height:19px;background:#a8a8a8;"></div>
<div style="left:1155px;top:964px;width:1px;height:19px;background:#a8a8a8;"></div>
<svg style="left:1161px;top:968px;" width="16" height="12" viewBox="0 0 16 12"><rect x="0.3" y="8.3" width="2.2" height="2.8" fill="#35b035" stroke="#1f8a1f" stroke-width="0.6"/><rect x="3.3" y="6.3" width="2.2" height="4.8" fill="#35b035" stroke="#1f8a1f" stroke-width="0.6"/><rect x="6.3" y="4.3" width="2.2" height="6.8" fill="#35b035" stroke="#1f8a1f" stroke-width="0.6"/>
<rect x="9.3" y="2.3" width="2.2" height="8.8" fill="#e4e4e4" stroke="#a8a8a8" stroke-width="0.7"/><rect x="12.3" y="0.3" width="2.2" height="10.8" fill="#e4e4e4" stroke="#a8a8a8" stroke-width="0.7"/></svg>
<span class="t" style="left:1181.50px;top:966.25px;font-size:12px;line-height:16px;height:16px;color:#000;transform:scaleX(0.9102);">209.41 ms</span>
</body></html>
